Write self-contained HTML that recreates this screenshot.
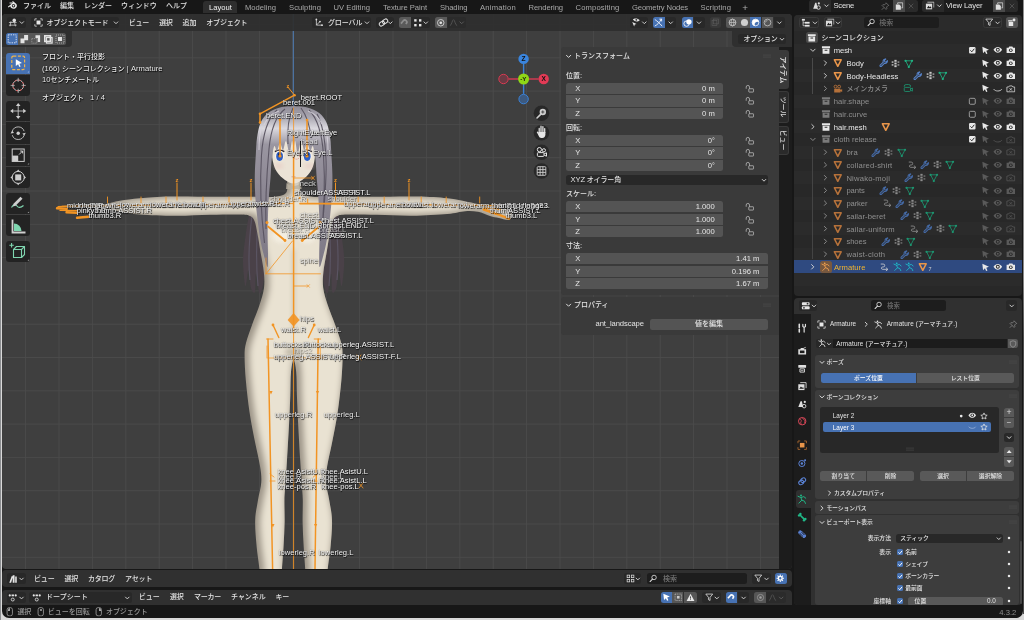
<!DOCTYPE html>
<html lang="ja"><head><meta charset="utf-8"><title>Blender</title>
<style>
html,body{margin:0;padding:0;}
body{width:1024px;height:620px;overflow:hidden;background:#d9d9d9;position:relative;font-family:"Liberation Sans","Noto Sans CJK JP",sans-serif;}
#win{will-change:transform;opacity:0.9999;position:absolute;left:0;top:0;width:1024px;height:620px;overflow:hidden;}
.r{position:absolute;box-sizing:border-box;}
.t{position:absolute;white-space:nowrap;font-size:7px;font-weight:500;line-height:12px;height:12px;color:#e3e3e3;}
.t .l{font-size:1.09em;}
.i{position:absolute;overflow:visible;}
.sh{text-shadow:0 0 1px #000,0.5px 0.5px 1px #000;}
.bl{color:#fff;font-size:7.6px;font-weight:400;text-shadow:0.5px 0.5px 0.8px rgba(0,0,0,.9),0 0 1px rgba(0,0,0,.8);}

</style></head>
<body>
<svg width="0" height="0" style="position:absolute">
<defs>
<symbol id="logo" viewBox="0 0 16 16"><path d="M1.2 10.2 7.6 5.3H3.9V3.9h5.5L7.9 2.7 8.9 1.6l5 4.1c1.3 1.2 1.5 3 .9 4.4-.8 1.9-2.7 3.1-4.9 3.1-2.4 0-4.5-1.5-5.0-3.6l-2.4 1.9z" fill="currentColor"/><circle cx="9.9" cy="8.7" r="2.6" fill="#181818"/><circle cx="9.9" cy="8.7" r="1.3" fill="currentColor"/></symbol>
<symbol id="coll" viewBox="0 0 16 16"><path d="M1.5 2h13v3.2h-13z M2.5 6h11v8h-11z" fill="currentColor"/><rect x="5.8" y="7.6" width="4.4" height="1.6" fill="#282828"/></symbol>
<symbol id="mesh" viewBox="0 0 16 16"><path d="M2.4 3h11.2L8 13.8z" fill="none" stroke="currentColor" stroke-width="2.6" stroke-linejoin="round"/></symbol>
<symbol id="wrench" viewBox="0 0 16 16"><path d="M10.8 1.6a4 4 0 0 0-3.3 5.6L2 12.6a1.5 1.5 0 0 0 2.1 2.1l5.3-5.5a4 4 0 0 0 5.2-4.6l-2.4 2.4-2.2-.6-.6-2.2 2.4-2.4a4 4 0 0 0-1-.2z" fill="none" stroke="currentColor" stroke-width="1.9" stroke-linejoin="round"/></symbol>
<symbol id="parts" viewBox="0 0 16 16"><g fill="currentColor"><rect x="6" y="1.5" width="4" height="3.4"/><rect x="6" y="6.3" width="4" height="3.4"/><rect x="6" y="11.1" width="4" height="3.4"/><rect x="1.2" y="4" width="3.2" height="3" opacity=".8"/><rect x="1.2" y="9" width="3.2" height="3" opacity=".8"/><rect x="11.6" y="4" width="3.2" height="3" opacity=".6"/><rect x="11.6" y="9" width="3.2" height="3" opacity=".6"/></g></symbol>
<symbol id="mdata" viewBox="0 0 16 16"><path d="M2.6 3h10.8L8 13.4z" fill="none" stroke="currentColor" stroke-width="1.4"/><circle cx="2.6" cy="3" r="1.9" fill="currentColor"/><circle cx="13.4" cy="3" r="1.9" fill="currentColor"/><circle cx="8" cy="13.4" r="1.9" fill="currentColor"/></symbol>
<symbol id="camob" viewBox="0 0 16 16"><circle cx="4.2" cy="4.4" r="2.4" fill="none" stroke="currentColor" stroke-width="1.5"/><circle cx="10.2" cy="4.4" r="2.4" fill="none" stroke="currentColor" stroke-width="1.5"/><path d="M2 8h10.5v2l3-1.5v5l-3-1.5v2H2z" fill="currentColor"/></symbol>
<symbol id="camdata" viewBox="0 0 16 16"><path d="M2 6a3 3 0 0 1 3-3.5h4a3 3 0 0 1 3 3.5" fill="none" stroke="currentColor" stroke-width="1.4"/><rect x="2" y="7" width="10" height="6.5" rx="1.5" fill="none" stroke="currentColor" stroke-width="1.4"/><path d="M12 9.5l3-1.5v5l-3-1.5" fill="none" stroke="currentColor" stroke-width="1.4"/></symbol>
<symbol id="arrow" viewBox="0 0 16 16"><path d="M2.5 1.5 14.8 6.8 9.8 8.7 12 13.8 9.5 14.8 7.3 9.7 3.8 13.4z" fill="currentColor"/></symbol>
<symbol id="eye" viewBox="0 0 16 16"><path d="M.8 8C3 4.6 5.4 3.2 8 3.2S13 4.6 15.2 8C13 11.4 10.6 12.8 8 12.8S3 11.4.8 8z" fill="currentColor"/><circle cx="8" cy="8" r="3.3" fill="#282828"/><circle cx="8" cy="8" r="1.7" fill="currentColor"/></symbol>
<symbol id="eyeoff" viewBox="0 0 16 16"><path d="M1.5 7.5C4 11 12 11 14.5 7.5" fill="none" stroke="currentColor" stroke-width="1.3" stroke-linecap="round"/></symbol>
<symbol id="cam" viewBox="0 0 16 16"><path d="M1 4.5h3.2l1.2-1.8h5.2l1.2 1.8H15V13.5H1z" fill="currentColor"/><circle cx="8" cy="8.8" r="3" fill="#282828"/><circle cx="8" cy="8.8" r="1.6" fill="currentColor"/></symbol>
<symbol id="camoff" viewBox="0 0 16 16"><path d="M1.5 5h3l1.2-1.8h4.6L11.5 5h3V13h-13z" fill="none" stroke="currentColor" stroke-width="1.2"/><path d="M6 7l4 4m0-4-4 4" stroke="currentColor" stroke-width="1.2"/></symbol>
<symbol id="chk" viewBox="0 0 16 16"><rect x="2" y="2" width="12" height="12" rx="2" fill="currentColor"/><path d="M4.5 8.2l2.6 2.6 4.6-5.6" fill="none" stroke="#222" stroke-width="1.8"/></symbol>
<symbol id="unchk" viewBox="0 0 16 16"><rect x="2.5" y="2.5" width="11" height="11" rx="2" fill="none" stroke="currentColor" stroke-width="1.4"/></symbol>
<symbol id="lock" viewBox="0 0 16 16"><path d="M2 8V5.2a2.8 2.8 0 0 1 5.6 0V8" fill="none" stroke="currentColor" stroke-width="1.2"/><rect x="6.4" y="8" width="8" height="5.6" rx=".8" fill="none" stroke="currentColor" stroke-width="1.2"/></symbol>
<symbol id="arm" viewBox="0 0 16 16"><circle cx="6.2" cy="2.2" r="1.5" fill="currentColor"/><path d="M1.5 3.5l4.5 2 4.5-1.5 3 2.5M6 5.5l1.5 4-4.5 4.5M7.5 9.5l4 1.5 1.5 3.5" fill="none" stroke="currentColor" stroke-width="1.5" stroke-linecap="round" stroke-linejoin="round"/></symbol>
<symbol id="con" viewBox="0 0 16 16"><path d="M2 3.5h3.5a2.5 2.5 0 0 1 0 5h-1a2 2 0 0 0 0 4H12" fill="none" stroke="currentColor" stroke-width="1.3" stroke-linecap="round"/><path d="M10.5 10l3 2.5-3 2.5" fill="none" stroke="currentColor" stroke-width="1.3" stroke-linecap="round" stroke-linejoin="round"/></symbol>
<symbol id="search" viewBox="0 0 16 16"><circle cx="9.5" cy="6.5" r="4.2" fill="none" stroke="currentColor" stroke-width="1.6"/><path d="M6.5 9.7 2 14.2" stroke="currentColor" stroke-width="2" stroke-linecap="round"/></symbol>
<symbol id="filter" viewBox="0 0 16 16"><path d="M1.5 2h13L9.5 8.2V14l-3-1.5V8.2z" fill="none" stroke="currentColor" stroke-width="1.5" stroke-linejoin="round"/></symbol>
<symbol id="pin" viewBox="0 0 16 16"><path d="M9.5 1.5 14.5 6.5l-1.5.5-2.5 2.5.5 3L9.5 14 2 6.5l1.5-1.5 3 .5 2.5-2.5z M5.5 10.5 1.5 14.5" fill="none" stroke="currentColor" stroke-width="1.2" stroke-linejoin="round"/></symbol>
<symbol id="copy" viewBox="0 0 16 16"><path d="M5 4V1.5h9.5V11H12" fill="none" stroke="currentColor" stroke-width="1.4"/><path d="M1.5 4.5h6.5l3 3V14.5h-9.5z" fill="currentColor"/></symbol>
<symbol id="xx" viewBox="0 0 16 16"><path d="M4 4l8 8m0-8-8 8" stroke="currentColor" stroke-width="1.5" stroke-linecap="round"/></symbol>
<symbol id="star" viewBox="0 0 16 16"><path d="M8 1.8 9.9 6l4.5.5-3.4 3 1 4.5L8 11.7 4 14l1-4.5-3.4-3L6.1 6z" fill="none" stroke="currentColor" stroke-width="1.5" stroke-linejoin="round"/></symbol>
<symbol id="shield" viewBox="0 0 16 16"><path d="M8 1.5 13.5 3.5v4.5c0 3-2.5 5.5-5.5 6.5-3-1-5.5-3.5-5.5-6.5v-4.5z" fill="none" stroke="currentColor" stroke-width="1.5"/></symbol>
<symbol id="mouse" viewBox="0 0 16 16"><rect x="3.5" y="1" width="9" height="14" rx="3.5" fill="none" stroke="currentColor" stroke-width="1.3"/></symbol>
<symbol id="scene" viewBox="0 0 16 16"><path d="M2 13 5.5 3h2l2 10z" fill="currentColor"/><circle cx="11.5" cy="4" r="1.8" fill="currentColor"/><circle cx="11" cy="11" r="3" fill="none" stroke="currentColor" stroke-width="1.5"/></symbol>
<symbol id="vlayer" viewBox="0 0 16 16"><path d="M4 2h11v9" fill="none" stroke="currentColor" stroke-width="1.3"/><rect x="1.5" y="4.5" width="10.5" height="9.5" fill="currentColor"/><path d="M3 12l3-4 2 2.5 1.5-1.5 1.5 3z" fill="#1d1d1d"/></symbol>
<symbol id="outl" viewBox="0 0 16 16"><rect x="1.5" y="1.5" width="5" height="3" fill="currentColor"/><rect x="6.5" y="6.5" width="8" height="3" fill="currentColor"/><rect x="6.5" y="11.5" width="8" height="3" fill="currentColor"/><path d="M3.5 4.5V13h3M3.5 8h3" fill="none" stroke="currentColor" stroke-width="1.2"/></symbol>
<symbol id="newcol" viewBox="0 0 16 16"><path d="M2 4h8v2H2z M3 7h8v7H3z" fill="currentColor"/><circle cx="12.5" cy="3.5" r="2.5" fill="currentColor"/></symbol>
<symbol id="props" viewBox="0 0 16 16"><rect x="1.5" y="2" width="13" height="5" rx="1.5" fill="currentColor"/><rect x="1.5" y="9" width="13" height="5" rx="1.5" fill="currentColor"/><circle cx="11" cy="4.5" r="1.5" fill="#303030"/><circle cx="5" cy="11.5" r="1.5" fill="#303030"/></symbol>
<symbol id="v3d" viewBox="0 0 16 16"><circle cx="10.5" cy="4" r="3" fill="currentColor"/><path d="M1.5 7.5h13M1.5 12h13M5 5.5 3.5 14M11 7.5l1.5 6.5" stroke="currentColor" stroke-width="1.2" fill="none"/></symbol>
<symbol id="objmode" viewBox="0 0 16 16"><rect x="4.5" y="4.5" width="7" height="7" fill="currentColor"/><path d="M1.5 5V1.5H5M11 1.5h3.5V5M14.5 11v3.5H11M5 14.5H1.5V11" fill="none" stroke="currentColor" stroke-width="1.3"/></symbol>
<symbol id="orient" viewBox="0 0 16 16"><path d="M4 2v10h10" fill="none" stroke="currentColor" stroke-width="1.3"/><path d="M4 12l6-6" stroke="currentColor" stroke-width="1.3"/><circle cx="4" cy="2.5" r="1.5" fill="currentColor"/><circle cx="13.5" cy="12" r="1.5" fill="currentColor"/><circle cx="10" cy="6" r="1.5" fill="currentColor"/></symbol>
<symbol id="pivot" viewBox="0 0 16 16"><g fill="none" stroke="currentColor" stroke-width="1.5" transform="rotate(-35 8 8)"><rect x="1.2" y="5.2" width="8" height="5.6" rx="2.8"/><rect x="6.8" y="5.2" width="8" height="5.6" rx="2.8"/></g></symbol>
<symbol id="magnet" viewBox="0 0 16 16"><path d="M3 13.5V7a5 5 0 0 1 10 0v1.5h-3V7a2 2 0 0 0-4 0v6.5z" fill="currentColor"/></symbol>
<symbol id="dots4" viewBox="0 0 16 16"><g fill="currentColor"><rect x="2" y="2" width="4" height="4"/><rect x="10" y="2" width="4" height="4"/><rect x="2" y="10" width="4" height="4"/><rect x="10" y="10" width="4" height="4"/></g></symbol>
<symbol id="prop" viewBox="0 0 16 16"><circle cx="8" cy="8" r="5.5" fill="none" stroke="currentColor" stroke-width="1.3"/><circle cx="8" cy="8" r="2.2" fill="currentColor"/></symbol>
<symbol id="falloff" viewBox="0 0 16 16"><path d="M1.5 13.5C5 13.5 5.5 3 8 3s3 10.5 6.5 10.5" fill="none" stroke="currentColor" stroke-width="1.3"/></symbol>
<symbol id="vis" viewBox="0 0 16 16"><path d="M3 4C5 1.8 11 1.8 14 5 11 8 6 8 3 4z" fill="currentColor"/><circle cx="8.5" cy="4.5" r="1.5" fill="#303030"/><path d="M2 8l7 3-3 .8L5 15z" fill="currentColor"/></symbol>
<symbol id="gizmo" viewBox="0 0 16 16"><path d="M2 14C6 12 10 8 13 2M2 3c3 2 8 6 12 11" fill="none" stroke="currentColor" stroke-width="1.5" stroke-linecap="round"/><path d="M9.5 2h4v4" fill="none" stroke="currentColor" stroke-width="1.5"/></symbol>
<symbol id="overlay" viewBox="0 0 16 16"><circle cx="6" cy="9.5" r="4.5" fill="none" stroke="currentColor" stroke-width="1.4"/><circle cx="10" cy="6.5" r="4.5" fill="currentColor"/></symbol>
<symbol id="xray" viewBox="0 0 16 16"><rect x="2" y="5" width="9" height="9" fill="none" stroke="currentColor" stroke-width="1.2"/><rect x="5" y="2" width="9" height="9" fill="none" stroke="currentColor" stroke-width="1.2"/></symbol>
<symbol id="shwire" viewBox="0 0 16 16"><circle cx="8" cy="8" r="6" fill="none" stroke="currentColor" stroke-width="1.3"/><ellipse cx="8" cy="8" rx="2.5" ry="6" fill="none" stroke="currentColor" stroke-width="1"/><path d="M2 8h12" stroke="currentColor" stroke-width="1"/></symbol>
<symbol id="shsolid" viewBox="0 0 16 16"><circle cx="8" cy="8" r="6.3" fill="currentColor"/></symbol>
<symbol id="shmat" viewBox="0 0 16 16"><circle cx="8" cy="8" r="6" fill="none" stroke="currentColor" stroke-width="1.3"/><path d="M8 2a6 6 0 0 0 0 12c-2-2-2-4 0-6s4-2 6 0a6 6 0 0 0-6-6z" fill="currentColor"/></symbol>
<symbol id="shrend" viewBox="0 0 16 16"><circle cx="8" cy="8" r="6" fill="none" stroke="currentColor" stroke-width="1.6"/><path d="M4.5 8a3.5 3.5 0 0 1 3.5-3.5" fill="none" stroke="currentColor" stroke-width="1.3"/></symbol>
<symbol id="asset" viewBox="0 0 16 16"><path d="M2 14 6 3l2 .8L5 14z M7.5 2h3v12h-3z M11.5 4h2.5v10h-2.5z" fill="currentColor"/></symbol>
<symbol id="dope" viewBox="0 0 16 16"><circle cx="3" cy="4" r="1.8" fill="currentColor"/><rect x="6" y="2.5" width="4" height="3" fill="currentColor"/><circle cx="13" cy="4" r="1.8" fill="currentColor"/><circle cx="8" cy="11" r="2.5" fill="none" stroke="currentColor" stroke-width="1.4"/></symbol>
<symbol id="grid4" viewBox="0 0 16 16"><g fill="none" stroke="currentColor" stroke-width="1.3"><rect x="2" y="2" width="4.5" height="4.5"/><rect x="9.5" y="2" width="4.5" height="4.5"/><rect x="2" y="9.5" width="4.5" height="4.5"/><rect x="9.5" y="9.5" width="4.5" height="4.5"/></g></symbol>
<symbol id="gear" viewBox="0 0 16 16"><circle cx="8" cy="8" r="3.5" fill="none" stroke="currentColor" stroke-width="2.5"/><path d="M8 1v3M8 12v3M1 8h3M12 8h3M3 3l2.2 2.2M10.8 10.8 13 13M13 3l-2.2 2.2M5.2 10.8 3 13" stroke="currentColor" stroke-width="2"/></symbol>
<symbol id="warn" viewBox="0 0 16 16"><path d="M8 1.5 15 14H1z" fill="currentColor"/><path d="M8 6v4M8 11.2v1.3" stroke="#444" stroke-width="1.6"/></symbol>
<symbol id="selbox" viewBox="0 0 16 16"><rect x="2" y="2" width="12" height="12" fill="none" stroke="currentColor" stroke-width="1.2" stroke-dasharray="2 1.3"/><rect x="5.5" y="5.5" width="5" height="5" fill="currentColor"/></symbol>
</defs>
</svg>

<div id="win">
<div class="r " style="left:1.50px;top:0.00px;width:1021.00px;height:618.30px;background:#171717;border-radius:0 0 7px 7px;"></div>
<div class="r " style="left:0.00px;top:0.00px;width:1.40px;height:620.00px;background:#8b8d90;"></div>
<div class="r " style="left:1022.60px;top:0.00px;width:1.40px;height:614.00px;background:linear-gradient(#909090,#8a8a8a 45%,#4e4e4e 55%,#4a4a4a);"></div>
<svg class="i" style="left:6.65px;top:0.15px;width:10.50px;height:10.50px;color:#e6e6e6;"><use href="#logo"/></svg>
<div id="t1" class="t " style="top:-0.30px;left:23.00px;letter-spacing:0.000px;">ファイル</div>
<div id="t2" class="t " style="top:-0.30px;left:60.00px;letter-spacing:0.000px;">編集</div>
<div id="t3" class="t " style="top:-0.30px;left:84.00px;letter-spacing:0.000px;">レンダー</div>
<div id="t4" class="t " style="top:-0.30px;left:121.00px;letter-spacing:0.200px;">ウィンドウ</div>
<div id="t5" class="t " style="top:-0.30px;left:166.00px;letter-spacing:0.000px;">ヘルプ</div>
<div class="r " style="left:202.80px;top:1.30px;width:34.20px;height:12.00px;background:#2e2e2e;border-radius:3px 3px 0 0;"></div>
<div id="t6" class="t " style="top:2.10px;left:209.00px;color:#f0f0f0;letter-spacing:0.016px;"><span class="l">Layout</span></div>
<div id="t7" class="t " style="top:2.10px;left:245.00px;color:#a8a8a8;letter-spacing:0.006px;"><span class="l">Modeling</span></div>
<div id="t8" class="t " style="top:2.10px;left:289.00px;color:#a8a8a8;letter-spacing:0.069px;"><span class="l">Sculpting</span></div>
<div id="t9" class="t " style="top:2.10px;left:333.50px;color:#a8a8a8;letter-spacing:0.047px;"><span class="l">UV Editing</span></div>
<div id="t10" class="t " style="top:2.10px;left:383.00px;color:#a8a8a8;letter-spacing:-0.040px;"><span class="l">Texture Paint</span></div>
<div id="t11" class="t " style="top:2.10px;left:440.00px;color:#a8a8a8;letter-spacing:-0.069px;"><span class="l">Shading</span></div>
<div id="t12" class="t " style="top:2.10px;left:480.00px;color:#a8a8a8;letter-spacing:0.231px;"><span class="l">Animation</span></div>
<div id="t13" class="t " style="top:2.10px;left:528.50px;color:#a8a8a8;letter-spacing:-0.076px;"><span class="l">Rendering</span></div>
<div id="t14" class="t " style="top:2.10px;left:575.50px;color:#a8a8a8;letter-spacing:0.146px;"><span class="l">Compositing</span></div>
<div id="t15" class="t " style="top:2.10px;left:632.00px;color:#a8a8a8;letter-spacing:-0.117px;"><span class="l">Geometry Nodes</span></div>
<div id="t16" class="t " style="top:2.10px;left:700.50px;color:#a8a8a8;letter-spacing:0.092px;"><span class="l">Scripting</span></div>
<div id="t17" class="t " style="top:1.60px;left:742.30px;color:#b0b0b0;font-size:9.00px;"><span class="l">+</span></div>
<div class="r " style="left:809.00px;top:0.40px;width:108.50px;height:11.30px;background:#2a2a2a;border-radius:2.5px;"></div>
<div class="r " style="left:831.00px;top:0.40px;width:61.50px;height:11.30px;background:#1d1d1d;"></div>
<div class="r " style="left:892.80px;top:0.40px;width:12.20px;height:11.30px;background:#4a4a4a;"></div>
<svg class="i" style="left:812.25px;top:1.15px;width:9.50px;height:9.50px;color:#dcdcdc;"><use href="#scene"/></svg>
<svg class="i" style="left:0;top:0;width:1024px;height:620px"><path d="M824.70 4.90 l1.80 1.80 l1.80 -1.80" fill="none" stroke="#ccc" stroke-width="1.0" stroke-linecap="round" stroke-linejoin="round"/></svg>
<div id="t18" class="t " style="top:-0.20px;left:833.50px;letter-spacing:-0.225px;"><span class="l">Scene</span></div>
<svg class="i" style="left:880.75px;top:1.65px;width:8.50px;height:8.50px;color:#8a8a8a;"><use href="#pin"/></svg>
<svg class="i" style="left:894.55px;top:1.65px;width:8.50px;height:8.50px;color:#e0e0e0;"><use href="#copy"/></svg>
<svg class="i" style="left:907.20px;top:1.90px;width:8.00px;height:8.00px;color:#5a5a5a;"><use href="#xx"/></svg>
<div class="r " style="left:922.00px;top:0.40px;width:96.00px;height:11.30px;background:#2a2a2a;border-radius:2.5px;"></div>
<div class="r " style="left:943.50px;top:0.40px;width:49.00px;height:11.30px;background:#1d1d1d;"></div>
<div class="r " style="left:992.80px;top:0.40px;width:12.40px;height:11.30px;background:#4a4a4a;"></div>
<svg class="i" style="left:925.25px;top:1.15px;width:9.50px;height:9.50px;color:#dcdcdc;"><use href="#vlayer"/></svg>
<svg class="i" style="left:0;top:0;width:1024px;height:620px"><path d="M937.50 4.90 l1.80 1.80 l1.80 -1.80" fill="none" stroke="#ccc" stroke-width="1.0" stroke-linecap="round" stroke-linejoin="round"/></svg>
<div id="t19" class="t " style="top:-0.20px;left:946.00px;letter-spacing:-0.109px;"><span class="l">View Layer</span></div>
<svg class="i" style="left:994.75px;top:1.65px;width:8.50px;height:8.50px;color:#e0e0e0;"><use href="#copy"/></svg>
<svg class="i" style="left:1007.50px;top:1.90px;width:8.00px;height:8.00px;color:#5a5a5a;"><use href="#xx"/></svg>
<div class="r" style="left:2px;top:14.4px;width:789.6px;height:554.4px;background:#3f3f3f;border-radius:4px;overflow:hidden">
<svg class="i" style="left:-2px;top:-14.4px;width:1024px;height:620px" viewBox="0 0 1024 620"><path d="M-7.8 0V620M25.6 0V620M59.0 0V620M92.4 0V620M125.8 0V620M159.2 0V620M192.6 0V620M226.0 0V620M259.4 0V620M292.8 0V620M326.2 0V620M359.6 0V620M393.0 0V620M426.4 0V620M459.8 0V620M493.2 0V620M526.6 0V620M560.0 0V620M593.4 0V620M626.8 0V620M660.2 0V620M693.6 0V620M727.0 0V620M760.4 0V620M793.8 0V620M0 -8.8H1024M0 24.5H1024M0 57.8H1024M0 91.1H1024M0 124.4H1024M0 157.7H1024M0 191.0H1024M0 224.3H1024M0 257.6H1024M0 290.9H1024M0 324.2H1024M0 357.5H1024M0 390.8H1024M0 424.1H1024M0 457.4H1024M0 490.7H1024M0 524.0H1024M0 557.3H1024M0 590.6H1024" stroke="#4c4c4c" stroke-width="0.9" fill="none"/><path d="M293.3 0V140" stroke="#4f7fb8" stroke-width="1"/></svg>
<svg class="i" style="left:-2px;top:-14.4px;width:1024px;height:620px" viewBox="0 0 1024 620"><defs>
<linearGradient id="gsk" x1="0" x2="1" y1="0" y2="0"><stop offset="0" stop-color="#b9b1a0"/><stop offset=".5" stop-color="#e9e2d4"/><stop offset="1" stop-color="#cfc7b6"/></linearGradient>
<filter id="fsoft" x="-5%" y="-5%" width="110%" height="110%"><feMorphology operator="erode" radius="2.2"/><feGaussianBlur stdDeviation="3.3"/></filter>
<filter id="fhl" x="-20%" y="-20%" width="140%" height="140%"><feGaussianBlur stdDeviation="2"/></filter>
<clipPath id="cbody"><path d="M288.0 178.0C286.1 179.7 288.0 185.3 287.5 188.0C287.0 190.7 287.1 192.5 285.0 194.0C282.9 195.5 279.5 196.3 275.0 196.8C270.5 197.3 268.0 196.8 258.0 196.8C248.0 196.8 229.7 196.8 215.0 196.8C200.3 196.8 182.5 196.3 170.0 196.6C157.5 196.8 148.3 197.6 140.0 198.3C131.7 199.0 125.8 199.8 120.0 200.8C114.2 201.8 109.2 203.4 105.0 204.3C100.8 205.2 95.0 205.5 95.0 206.2C95.0 206.9 100.8 207.7 105.0 208.6C109.2 209.5 114.2 210.5 120.0 211.5C125.8 212.5 130.8 213.8 140.0 214.5C149.2 215.2 163.3 215.8 175.0 215.8C186.7 215.9 199.2 215.0 210.0 214.8C220.8 214.6 233.3 214.3 240.0 214.5C246.7 214.7 247.6 214.9 250.0 216.0C252.4 217.1 253.2 218.0 254.5 221.0C255.8 224.0 256.5 228.8 257.5 234.0C258.5 239.2 259.4 245.7 260.5 252.0C261.6 258.3 263.2 266.0 263.8 272.0C264.4 278.0 264.7 282.5 264.0 288.0C263.3 293.5 261.5 298.8 259.5 305.0C257.5 311.2 254.2 318.7 252.0 325.0C249.8 331.3 247.2 337.8 246.0 343.0C244.8 348.2 244.6 349.8 244.6 356.0C244.6 362.2 245.0 370.7 245.8 380.0C246.6 389.3 248.0 401.7 249.5 412.0C251.0 422.3 253.2 433.0 255.0 442.0C256.8 451.0 258.9 459.3 260.0 466.0C261.1 472.7 261.6 476.3 261.3 482.0C261.0 487.7 259.0 493.7 258.0 500.0C257.0 506.3 255.4 512.5 255.2 520.0C254.9 527.5 255.8 536.8 256.5 545.0C257.2 553.2 258.9 563.2 259.5 569.0C260.1 574.8 256.2 578.2 260.0 580.0C263.8 581.8 278.3 581.8 282.0 580.0C285.7 578.2 281.7 574.8 282.0 569.0C282.3 563.2 283.2 552.8 283.6 545.0C284.0 537.2 284.5 529.5 284.6 522.0C284.7 514.5 284.3 506.3 284.4 500.0C284.5 493.7 285.0 490.7 285.4 484.0C285.8 477.3 286.4 469.8 287.0 460.0C287.6 450.2 288.4 435.8 289.0 425.0C289.6 414.2 290.0 403.8 290.3 395.0C290.6 386.2 290.4 377.9 291.0 372.0C291.6 366.1 292.7 359.5 293.6 359.5C294.5 359.5 295.7 366.1 296.2 372.0C296.8 377.9 296.6 386.2 296.9 395.0C297.2 403.8 297.7 414.2 298.2 425.0C298.8 435.8 299.6 450.2 300.2 460.0C300.8 469.8 301.4 477.3 301.8 484.0C302.2 490.7 302.7 493.7 302.8 500.0C302.9 506.3 302.5 514.5 302.6 522.0C302.7 529.5 303.2 537.2 303.6 545.0C304.0 552.8 304.9 563.2 305.2 569.0C305.5 574.8 301.5 578.2 305.2 580.0C308.9 581.8 323.5 581.8 327.2 580.0C331.0 578.2 327.1 574.8 327.7 569.0C328.3 563.2 330.0 553.2 330.7 545.0C331.4 536.8 332.3 527.5 332.0 520.0C331.8 512.5 330.2 506.3 329.2 500.0C328.2 493.7 326.2 487.7 325.9 482.0C325.6 476.3 326.2 472.7 327.2 466.0C328.3 459.3 330.5 451.0 332.2 442.0C334.0 433.0 336.2 422.3 337.7 412.0C339.2 401.7 340.6 389.3 341.4 380.0C342.2 370.7 342.6 362.2 342.6 356.0C342.6 349.8 342.4 348.2 341.2 343.0C340.0 337.8 337.5 331.3 335.2 325.0C333.0 318.7 329.7 311.2 327.7 305.0C325.7 298.8 323.9 293.5 323.2 288.0C322.5 282.5 322.8 278.0 323.4 272.0C324.0 266.0 325.7 258.3 326.7 252.0C327.8 245.7 328.7 239.2 329.7 234.0C330.7 228.8 331.5 224.0 332.7 221.0C334.0 218.0 334.8 217.1 337.2 216.0C339.6 214.9 340.5 214.7 347.2 214.5C353.9 214.3 366.4 214.6 377.2 214.8C388.0 215.0 400.5 215.8 412.2 215.7C423.9 215.6 438.4 214.8 447.2 214.0C456.0 213.2 459.9 211.6 465.0 211.2C470.1 210.8 473.8 211.0 478.0 211.8C482.2 212.6 486.5 215.0 490.0 216.0C493.5 217.0 495.8 217.4 499.0 218.0C502.2 218.6 506.8 220.5 509.0 219.8C511.2 219.1 513.0 215.8 512.5 214.0C512.0 212.2 508.9 210.3 506.0 209.0C503.1 207.7 499.7 207.0 495.0 206.2C490.3 205.4 482.5 204.7 478.0 204.0C473.5 203.3 473.1 202.9 468.0 202.0C462.9 201.1 455.7 199.2 447.2 198.3C438.7 197.4 429.7 196.8 417.2 196.6C404.7 196.3 386.9 196.8 372.2 196.8C357.5 196.8 339.2 196.8 329.2 196.8C319.2 196.8 316.7 197.3 312.2 196.8C307.7 196.3 304.3 195.5 302.2 194.0C300.1 192.5 300.2 190.7 299.7 188.0C299.2 185.3 301.2 179.7 299.2 178.0C297.3 176.3 289.9 176.3 288.0 178.0z"/></clipPath>
<linearGradient id="ghair" x1="0" x2="0" y1="0" y2="1"><stop offset="0" stop-color="#8f8b96"/><stop offset=".07" stop-color="#a9a6b0"/><stop offset=".14" stop-color="#dbd9df"/><stop offset=".24" stop-color="#9a96a1"/><stop offset=".5" stop-color="#8d8894"/><stop offset="1" stop-color="#7d7885"/></linearGradient>
</defs><path d="M262.0 150.0C259.5 155.0 257.2 179.2 255.0 190.0C252.8 200.8 250.7 206.7 249.0 215.0C247.3 223.3 246.0 232.2 245.0 240.0C244.0 247.8 242.9 254.3 243.0 262.0C243.1 269.7 244.6 284.7 245.5 286.0C246.4 287.3 247.6 269.7 248.5 270.0C249.4 270.3 249.9 284.3 251.0 288.0C252.1 291.7 254.2 294.3 255.0 292.0C255.8 289.7 255.2 273.8 256.0 274.0C256.8 274.2 258.3 291.2 259.5 293.0C260.7 294.8 261.9 290.2 263.0 285.0C264.1 279.8 265.2 271.2 266.0 262.0C266.8 252.8 267.5 240.3 268.0 230.0C268.5 219.7 268.7 211.7 269.0 200.0C269.3 188.3 271.2 168.3 270.0 160.0C268.8 151.7 264.5 145.0 262.0 150.0z" fill="#4a4148"/><path d="M325.2 150.0C327.7 155.0 330.0 179.2 332.2 190.0C334.4 200.8 336.5 206.7 338.2 215.0C339.9 223.3 341.2 232.2 342.2 240.0C343.2 247.8 344.3 254.3 344.2 262.0C344.1 269.7 342.6 284.7 341.7 286.0C340.8 287.3 339.6 269.7 338.7 270.0C337.8 270.3 337.3 284.3 336.2 288.0C335.1 291.7 333.0 294.3 332.2 292.0C331.4 289.7 332.0 273.8 331.2 274.0C330.5 274.2 328.9 291.2 327.7 293.0C326.5 294.8 325.3 290.2 324.2 285.0C323.1 279.8 322.0 271.2 321.2 262.0C320.4 252.8 319.7 240.3 319.2 230.0C318.7 219.7 318.5 211.7 318.2 200.0C317.9 188.3 316.0 168.3 317.2 160.0C318.4 151.7 322.7 145.0 325.2 150.0z" fill="#4a4148"/><path d="M252 215C249 240 248 262 250 280M258 220c-2 25-2 45 0 66" stroke="#5a5462" stroke-width="1.2" fill="none"/><path d="M335 215C338 240 339 262 337 280M329 220c2 25 2 45 0 66" stroke="#5a5462" stroke-width="1.2" fill="none"/><path d="M288.0 178.0C286.1 179.7 288.0 185.3 287.5 188.0C287.0 190.7 287.1 192.5 285.0 194.0C282.9 195.5 279.5 196.3 275.0 196.8C270.5 197.3 268.0 196.8 258.0 196.8C248.0 196.8 229.7 196.8 215.0 196.8C200.3 196.8 182.5 196.3 170.0 196.6C157.5 196.8 148.3 197.6 140.0 198.3C131.7 199.0 125.8 199.8 120.0 200.8C114.2 201.8 109.2 203.4 105.0 204.3C100.8 205.2 95.0 205.5 95.0 206.2C95.0 206.9 100.8 207.7 105.0 208.6C109.2 209.5 114.2 210.5 120.0 211.5C125.8 212.5 130.8 213.8 140.0 214.5C149.2 215.2 163.3 215.8 175.0 215.8C186.7 215.9 199.2 215.0 210.0 214.8C220.8 214.6 233.3 214.3 240.0 214.5C246.7 214.7 247.6 214.9 250.0 216.0C252.4 217.1 253.2 218.0 254.5 221.0C255.8 224.0 256.5 228.8 257.5 234.0C258.5 239.2 259.4 245.7 260.5 252.0C261.6 258.3 263.2 266.0 263.8 272.0C264.4 278.0 264.7 282.5 264.0 288.0C263.3 293.5 261.5 298.8 259.5 305.0C257.5 311.2 254.2 318.7 252.0 325.0C249.8 331.3 247.2 337.8 246.0 343.0C244.8 348.2 244.6 349.8 244.6 356.0C244.6 362.2 245.0 370.7 245.8 380.0C246.6 389.3 248.0 401.7 249.5 412.0C251.0 422.3 253.2 433.0 255.0 442.0C256.8 451.0 258.9 459.3 260.0 466.0C261.1 472.7 261.6 476.3 261.3 482.0C261.0 487.7 259.0 493.7 258.0 500.0C257.0 506.3 255.4 512.5 255.2 520.0C254.9 527.5 255.8 536.8 256.5 545.0C257.2 553.2 258.9 563.2 259.5 569.0C260.1 574.8 256.2 578.2 260.0 580.0C263.8 581.8 278.3 581.8 282.0 580.0C285.7 578.2 281.7 574.8 282.0 569.0C282.3 563.2 283.2 552.8 283.6 545.0C284.0 537.2 284.5 529.5 284.6 522.0C284.7 514.5 284.3 506.3 284.4 500.0C284.5 493.7 285.0 490.7 285.4 484.0C285.8 477.3 286.4 469.8 287.0 460.0C287.6 450.2 288.4 435.8 289.0 425.0C289.6 414.2 290.0 403.8 290.3 395.0C290.6 386.2 290.4 377.9 291.0 372.0C291.6 366.1 292.7 359.5 293.6 359.5C294.5 359.5 295.7 366.1 296.2 372.0C296.8 377.9 296.6 386.2 296.9 395.0C297.2 403.8 297.7 414.2 298.2 425.0C298.8 435.8 299.6 450.2 300.2 460.0C300.8 469.8 301.4 477.3 301.8 484.0C302.2 490.7 302.7 493.7 302.8 500.0C302.9 506.3 302.5 514.5 302.6 522.0C302.7 529.5 303.2 537.2 303.6 545.0C304.0 552.8 304.9 563.2 305.2 569.0C305.5 574.8 301.5 578.2 305.2 580.0C308.9 581.8 323.5 581.8 327.2 580.0C331.0 578.2 327.1 574.8 327.7 569.0C328.3 563.2 330.0 553.2 330.7 545.0C331.4 536.8 332.3 527.5 332.0 520.0C331.8 512.5 330.2 506.3 329.2 500.0C328.2 493.7 326.2 487.7 325.9 482.0C325.6 476.3 326.2 472.7 327.2 466.0C328.3 459.3 330.5 451.0 332.2 442.0C334.0 433.0 336.2 422.3 337.7 412.0C339.2 401.7 340.6 389.3 341.4 380.0C342.2 370.7 342.6 362.2 342.6 356.0C342.6 349.8 342.4 348.2 341.2 343.0C340.0 337.8 337.5 331.3 335.2 325.0C333.0 318.7 329.7 311.2 327.7 305.0C325.7 298.8 323.9 293.5 323.2 288.0C322.5 282.5 322.8 278.0 323.4 272.0C324.0 266.0 325.7 258.3 326.7 252.0C327.8 245.7 328.7 239.2 329.7 234.0C330.7 228.8 331.5 224.0 332.7 221.0C334.0 218.0 334.8 217.1 337.2 216.0C339.6 214.9 340.5 214.7 347.2 214.5C353.9 214.3 366.4 214.6 377.2 214.8C388.0 215.0 400.5 215.8 412.2 215.7C423.9 215.6 438.4 214.8 447.2 214.0C456.0 213.2 459.9 211.6 465.0 211.2C470.1 210.8 473.8 211.0 478.0 211.8C482.2 212.6 486.5 215.0 490.0 216.0C493.5 217.0 495.8 217.4 499.0 218.0C502.2 218.6 506.8 220.5 509.0 219.8C511.2 219.1 513.0 215.8 512.5 214.0C512.0 212.2 508.9 210.3 506.0 209.0C503.1 207.7 499.7 207.0 495.0 206.2C490.3 205.4 482.5 204.7 478.0 204.0C473.5 203.3 473.1 202.9 468.0 202.0C462.9 201.1 455.7 199.2 447.2 198.3C438.7 197.4 429.7 196.8 417.2 196.6C404.7 196.3 386.9 196.8 372.2 196.8C357.5 196.8 339.2 196.8 329.2 196.8C319.2 196.8 316.7 197.3 312.2 196.8C307.7 196.3 304.3 195.5 302.2 194.0C300.1 192.5 300.2 190.7 299.7 188.0C299.2 185.3 301.2 179.7 299.2 178.0C297.3 176.3 289.9 176.3 288.0 178.0z" fill="#9d9588"/><g clip-path="url(#cbody)"><path d="M288.0 178.0C286.1 179.7 288.0 185.3 287.5 188.0C287.0 190.7 287.1 192.5 285.0 194.0C282.9 195.5 279.5 196.3 275.0 196.8C270.5 197.3 268.0 196.8 258.0 196.8C248.0 196.8 229.7 196.8 215.0 196.8C200.3 196.8 182.5 196.3 170.0 196.6C157.5 196.8 148.3 197.6 140.0 198.3C131.7 199.0 125.8 199.8 120.0 200.8C114.2 201.8 109.2 203.4 105.0 204.3C100.8 205.2 95.0 205.5 95.0 206.2C95.0 206.9 100.8 207.7 105.0 208.6C109.2 209.5 114.2 210.5 120.0 211.5C125.8 212.5 130.8 213.8 140.0 214.5C149.2 215.2 163.3 215.8 175.0 215.8C186.7 215.9 199.2 215.0 210.0 214.8C220.8 214.6 233.3 214.3 240.0 214.5C246.7 214.7 247.6 214.9 250.0 216.0C252.4 217.1 253.2 218.0 254.5 221.0C255.8 224.0 256.5 228.8 257.5 234.0C258.5 239.2 259.4 245.7 260.5 252.0C261.6 258.3 263.2 266.0 263.8 272.0C264.4 278.0 264.7 282.5 264.0 288.0C263.3 293.5 261.5 298.8 259.5 305.0C257.5 311.2 254.2 318.7 252.0 325.0C249.8 331.3 247.2 337.8 246.0 343.0C244.8 348.2 244.6 349.8 244.6 356.0C244.6 362.2 245.0 370.7 245.8 380.0C246.6 389.3 248.0 401.7 249.5 412.0C251.0 422.3 253.2 433.0 255.0 442.0C256.8 451.0 258.9 459.3 260.0 466.0C261.1 472.7 261.6 476.3 261.3 482.0C261.0 487.7 259.0 493.7 258.0 500.0C257.0 506.3 255.4 512.5 255.2 520.0C254.9 527.5 255.8 536.8 256.5 545.0C257.2 553.2 258.9 563.2 259.5 569.0C260.1 574.8 256.2 578.2 260.0 580.0C263.8 581.8 278.3 581.8 282.0 580.0C285.7 578.2 281.7 574.8 282.0 569.0C282.3 563.2 283.2 552.8 283.6 545.0C284.0 537.2 284.5 529.5 284.6 522.0C284.7 514.5 284.3 506.3 284.4 500.0C284.5 493.7 285.0 490.7 285.4 484.0C285.8 477.3 286.4 469.8 287.0 460.0C287.6 450.2 288.4 435.8 289.0 425.0C289.6 414.2 290.0 403.8 290.3 395.0C290.6 386.2 290.4 377.9 291.0 372.0C291.6 366.1 292.7 359.5 293.6 359.5C294.5 359.5 295.7 366.1 296.2 372.0C296.8 377.9 296.6 386.2 296.9 395.0C297.2 403.8 297.7 414.2 298.2 425.0C298.8 435.8 299.6 450.2 300.2 460.0C300.8 469.8 301.4 477.3 301.8 484.0C302.2 490.7 302.7 493.7 302.8 500.0C302.9 506.3 302.5 514.5 302.6 522.0C302.7 529.5 303.2 537.2 303.6 545.0C304.0 552.8 304.9 563.2 305.2 569.0C305.5 574.8 301.5 578.2 305.2 580.0C308.9 581.8 323.5 581.8 327.2 580.0C331.0 578.2 327.1 574.8 327.7 569.0C328.3 563.2 330.0 553.2 330.7 545.0C331.4 536.8 332.3 527.5 332.0 520.0C331.8 512.5 330.2 506.3 329.2 500.0C328.2 493.7 326.2 487.7 325.9 482.0C325.6 476.3 326.2 472.7 327.2 466.0C328.3 459.3 330.5 451.0 332.2 442.0C334.0 433.0 336.2 422.3 337.7 412.0C339.2 401.7 340.6 389.3 341.4 380.0C342.2 370.7 342.6 362.2 342.6 356.0C342.6 349.8 342.4 348.2 341.2 343.0C340.0 337.8 337.5 331.3 335.2 325.0C333.0 318.7 329.7 311.2 327.7 305.0C325.7 298.8 323.9 293.5 323.2 288.0C322.5 282.5 322.8 278.0 323.4 272.0C324.0 266.0 325.7 258.3 326.7 252.0C327.8 245.7 328.7 239.2 329.7 234.0C330.7 228.8 331.5 224.0 332.7 221.0C334.0 218.0 334.8 217.1 337.2 216.0C339.6 214.9 340.5 214.7 347.2 214.5C353.9 214.3 366.4 214.6 377.2 214.8C388.0 215.0 400.5 215.8 412.2 215.7C423.9 215.6 438.4 214.8 447.2 214.0C456.0 213.2 459.9 211.6 465.0 211.2C470.1 210.8 473.8 211.0 478.0 211.8C482.2 212.6 486.5 215.0 490.0 216.0C493.5 217.0 495.8 217.4 499.0 218.0C502.2 218.6 506.8 220.5 509.0 219.8C511.2 219.1 513.0 215.8 512.5 214.0C512.0 212.2 508.9 210.3 506.0 209.0C503.1 207.7 499.7 207.0 495.0 206.2C490.3 205.4 482.5 204.7 478.0 204.0C473.5 203.3 473.1 202.9 468.0 202.0C462.9 201.1 455.7 199.2 447.2 198.3C438.7 197.4 429.7 196.8 417.2 196.6C404.7 196.3 386.9 196.8 372.2 196.8C357.5 196.8 339.2 196.8 329.2 196.8C319.2 196.8 316.7 197.3 312.2 196.8C307.7 196.3 304.3 195.5 302.2 194.0C300.1 192.5 300.2 190.7 299.7 188.0C299.2 185.3 301.2 179.7 299.2 178.0C297.3 176.3 289.9 176.3 288.0 178.0z" fill="#e9e2d2" filter="url(#fsoft)" transform="translate(2.8 0)"/></g><g clip-path="url(#cbody)" filter="url(#fhl)" opacity=".55"><ellipse cx="281" cy="236" rx="9" ry="7" fill="#fbf7ee"/><ellipse cx="307" cy="236" rx="9" ry="7" fill="#fbf7ee"/><path d="M293.6 250V330" stroke="#a79f8f" stroke-width="2"/><ellipse cx="293.6" cy="352" rx="9" ry="4" fill="#a39b8a"/></g><path d="M275.0 128.0C268.4 131.7 272.7 144.3 272.4 150.0C272.1 155.7 272.2 158.3 273.0 162.0C273.8 165.7 275.0 169.0 277.0 172.0C279.0 175.0 282.2 178.1 285.0 180.0C287.8 181.9 290.7 183.5 293.6 183.5C296.5 183.5 299.4 181.9 302.2 180.0C305.0 178.1 308.2 175.0 310.2 172.0C312.2 169.0 313.4 165.7 314.2 162.0C315.0 158.3 315.1 155.7 314.8 150.0C314.5 144.3 318.8 131.7 312.2 128.0C305.6 124.3 281.6 124.3 275.0 128.0z" fill="#ebe3d6"/><ellipse cx="279" cy="166" rx="4.5" ry="2.5" fill="#e6c3bd" opacity=".6" filter="url(#fhl)"/><ellipse cx="309" cy="166" rx="4.5" ry="2.5" fill="#e6c3bd" opacity=".6" filter="url(#fhl)"/><path d="M286.5 183c4 4 10 4 14.5 0l.5 6h-15.5z" fill="#b9b0a0" opacity=".8"/><ellipse cx="279.6" cy="156" rx="4.6" ry="5" fill="#f4f2f0"/><ellipse cx="279.6" cy="156.3" rx="3.4" ry="4.6" fill="#2f5fc4"/><ellipse cx="279.6" cy="155" rx="1.6" ry="2.2" fill="#15254f"/><path d="M274.9 151.6c2.6-2 6.6-2 9.4 0" stroke="#2a2530" stroke-width="1.4" fill="none"/><ellipse cx="307.2" cy="156" rx="4.6" ry="5" fill="#f4f2f0"/><ellipse cx="307.2" cy="156.3" rx="3.4" ry="4.6" fill="#2f5fc4"/><ellipse cx="307.2" cy="155" rx="1.6" ry="2.2" fill="#15254f"/><path d="M302.5 151.6c2.6-2 6.6-2 9.4 0" stroke="#2a2530" stroke-width="1.4" fill="none"/><path d="M291.5 176.8h4" stroke="#c99a94" stroke-width=".8"/><path d="M293.6 106.0C291.3 106.2 284.3 106.3 280.0 107.5C275.7 108.7 271.2 110.4 268.0 113.0C264.8 115.6 262.3 118.8 260.5 123.0C258.7 127.2 257.8 132.7 257.0 138.0C256.2 143.3 256.2 148.8 255.8 155.0C255.4 161.2 254.9 168.3 254.8 175.0C254.7 181.7 254.8 188.3 255.2 195.0C255.6 201.7 256.2 207.8 257.0 215.0C257.8 222.2 258.9 231.5 260.0 238.0C261.1 244.5 262.2 249.2 263.5 254.0C264.8 258.8 266.8 267.0 267.5 267.0C268.2 267.0 268.0 259.3 268.0 254.0C268.0 248.7 267.6 241.5 267.6 235.0C267.6 228.5 267.8 221.7 268.0 215.0C268.2 208.3 268.6 201.2 269.0 195.0C269.4 188.8 270.1 183.5 270.5 178.0C270.9 172.5 271.1 166.2 271.5 162.0C271.9 157.8 272.1 155.7 272.6 153.0C273.1 150.3 273.8 146.3 274.5 146.0C275.2 145.7 276.1 151.5 277.0 151.0C277.9 150.5 279.0 143.2 280.0 143.0C281.0 142.8 282.0 150.3 283.0 150.0C284.0 149.7 284.9 140.5 286.0 141.0C287.1 141.5 288.5 153.0 289.5 153.0C290.5 153.0 291.3 141.8 292.0 141.0C292.7 140.2 293.1 148.0 293.6 148.0C294.1 148.0 294.5 140.2 295.2 141.0C295.9 141.8 296.7 153.0 297.7 153.0C298.7 153.0 300.1 141.5 301.2 141.0C302.3 140.5 303.2 149.7 304.2 150.0C305.2 150.3 306.2 142.8 307.2 143.0C308.2 143.2 309.3 150.5 310.2 151.0C311.1 151.5 312.0 145.7 312.7 146.0C313.4 146.3 314.1 150.3 314.6 153.0C315.1 155.7 315.4 157.8 315.7 162.0C316.1 166.2 316.3 172.5 316.7 178.0C317.1 183.5 317.8 188.8 318.2 195.0C318.6 201.2 319.0 208.3 319.2 215.0C319.4 221.7 319.6 228.5 319.6 235.0C319.6 241.5 319.2 248.7 319.2 254.0C319.2 259.3 319.0 267.0 319.7 267.0C320.5 267.0 322.5 258.8 323.7 254.0C325.0 249.2 326.1 244.5 327.2 238.0C328.3 231.5 329.4 222.2 330.2 215.0C331.0 207.8 331.6 201.7 332.0 195.0C332.4 188.3 332.5 181.7 332.4 175.0C332.3 168.3 331.8 161.2 331.4 155.0C331.0 148.8 331.0 143.3 330.2 138.0C329.4 132.7 328.5 127.2 326.7 123.0C324.9 118.8 322.5 115.6 319.2 113.0C316.0 110.4 311.5 108.7 307.2 107.5C302.9 106.3 295.9 106.2 293.6 106.0C291.3 105.8 295.9 105.8 293.6 106.0z" fill="url(#ghair)"/><g fill="none" stroke="#55505d" stroke-width="1.1" opacity=".9"><path d="M285 109c-8 6-14 18-16 40s-4 50-3 80M277 110c-9 8-14 22-15.5 45s-1 55 3 88M293 108c-4 8-6 20-5 36M301 108c6 8 9 18 10 30M309 110c8 8 13 22 14.5 45s1 55-3 86M317 114c6 10 8 25 9 45s-2 48-4 72"/></g><g fill="none" stroke="#d7d3dc" stroke-width="1.1" opacity=".8"><path d="M264 125c3-7 8-12 15-14M322 124c-3-6-8-11-14-13M259 150c0-10 1-18 3-24M328 150c0-9-1-17-3-23"/></g></svg><svg class="i" style="left:-2px;top:-14.4px;width:1024px;height:620px" viewBox="0 0 1024 620"><path d="M260.0 113.8L294.5 95.2" stroke="#f29423" stroke-width="1.5" stroke-linecap="round" opacity="1"/><path d="M294.5 95.2L288.0 87.2" stroke="#f29423" stroke-width="1.0" stroke-linecap="round" opacity="1"/><path d="M260.0 113.8L260.0 122.5" stroke="#f29423" stroke-width="1.5" stroke-linecap="round" opacity="1"/><circle cx="260.0" cy="113.8" r="1.3" fill="#f29423"/><circle cx="260.0" cy="122.5" r="1.3" fill="#f29423"/><circle cx="294.5" cy="95.2" r="1.3" fill="#f29423"/><path d="M280.0 120.0L280.0 156.0" stroke="#f29423" stroke-width="1.5" stroke-linecap="round" opacity="1"/><circle cx="280.0" cy="120.0" r="1.3" fill="#f29423"/><circle cx="280.0" cy="156.0" r="1.6" fill="#f29423"/><path d="M307.0 120.0L307.0 156.0" stroke="#f29423" stroke-width="1.5" stroke-linecap="round" opacity="1"/><circle cx="307.0" cy="120.0" r="1.3" fill="#f29423"/><circle cx="307.0" cy="156.0" r="1.6" fill="#f29423"/><path d="M293.6 108.0L293.6 132.0" stroke="#f29423" stroke-width="0.8" stroke-linecap="round" opacity="1"/><path d="M293.6 132.0L293.6 330.0" stroke="#f29423" stroke-width="1.5" stroke-linecap="round" opacity="1"/><path d="M293.6 330.0L293.6 568.8" stroke="#f29423" stroke-width="0.9" stroke-linecap="round" opacity="1"/><path d="M293.6 178.0L313.0 178.0" stroke="#f29423" stroke-width="0.8" stroke-linecap="round" opacity="1"/><path d="M311.5 176.2L314.5 179.8" stroke="#f29423" stroke-width="0.7" stroke-linecap="round" opacity="1"/><path d="M314.5 176.2L311.5 179.8" stroke="#f29423" stroke-width="0.7" stroke-linecap="round" opacity="1"/><path d="M300.5 141v26" stroke="#1a1a1a" stroke-width="1"/><circle cx="296.5" cy="156" r="3.2" fill="none" stroke="#e05050" stroke-width=".6" stroke-dasharray="1 1"/><path d="M62.0 206.2L262.0 203.8" stroke="#f29423" stroke-width="1.1" stroke-linecap="round" opacity="1"/><path d="M325.0 203.8L500.0 205.6" stroke="#f29423" stroke-width="1.1" stroke-linecap="round" opacity="1"/><path d="M300.0 203.6L346.0 203.6" stroke="#f29423" stroke-width="1.7" stroke-linecap="round" opacity="1"/><path d="M262.0 203.6L293.6 203.6" stroke="#f29423" stroke-width="0.9" stroke-linecap="round" opacity="1"/><path d="M177.0 183.0L177.0 200.0" stroke="#f29423" stroke-width="1.0" stroke-linecap="round" opacity="1"/><path d="M251.0 183.0L251.0 200.0" stroke="#f29423" stroke-width="1.0" stroke-linecap="round" opacity="1"/><path d="M335.5 183.0L335.5 200.0" stroke="#f29423" stroke-width="1.0" stroke-linecap="round" opacity="1"/><path d="M409.0 183.0L409.0 200.0" stroke="#f29423" stroke-width="1.0" stroke-linecap="round" opacity="1"/><path d="M107.5 197.0L107.5 203.0" stroke="#f29423" stroke-width="0.9" stroke-linecap="round" opacity="1"/><path d="M479.7 197.0L479.7 203.0" stroke="#f29423" stroke-width="0.9" stroke-linecap="round" opacity="1"/><path d="M141.0 197.0L141.0 203.0" stroke="#f29423" stroke-width="0.9" stroke-linecap="round" opacity="1"/><path d="M446.2 197.0L446.2 203.0" stroke="#f29423" stroke-width="0.9" stroke-linecap="round" opacity="1"/><path d="M166.0 197.0L166.0 203.0" stroke="#f29423" stroke-width="0.9" stroke-linecap="round" opacity="1"/><path d="M421.2 197.0L421.2 203.0" stroke="#f29423" stroke-width="0.9" stroke-linecap="round" opacity="1"/><path d="M203.0 197.0L203.0 203.0" stroke="#f29423" stroke-width="0.9" stroke-linecap="round" opacity="1"/><path d="M384.2 197.0L384.2 203.0" stroke="#f29423" stroke-width="0.9" stroke-linecap="round" opacity="1"/><path d="M229.0 197.0L229.0 203.0" stroke="#f29423" stroke-width="0.9" stroke-linecap="round" opacity="1"/><path d="M358.2 197.0L358.2 203.0" stroke="#f29423" stroke-width="0.9" stroke-linecap="round" opacity="1"/><path d="M279.5 199.0L279.5 203.5" stroke="#f29423" stroke-width="1.0" stroke-linecap="round" opacity="1"/><path d="M307.7 199.0L307.7 203.5" stroke="#f29423" stroke-width="1.0" stroke-linecap="round" opacity="1"/><circle cx="287.5" cy="198.0" r="1.0" fill="#f29423"/><circle cx="299.7" cy="198.0" r="1.0" fill="#f29423"/><path d="M57.0 208.3L67.0 208.8" stroke="#f29423" stroke-width="2.4" stroke-linecap="round" opacity="1"/><path d="M66.5 212.3L77.0 212.8" stroke="#f29423" stroke-width="2.4" stroke-linecap="round" opacity="1"/><path d="M77.0 217.8L88.5 216.8" stroke="#f29423" stroke-width="2.4" stroke-linecap="round" opacity="1"/><path d="M58.0 206.6L70.0 206.2" stroke="#f29423" stroke-width="1.2" stroke-linecap="round" opacity="1"/><path d="M60.0 210.4L78.0 210.6" stroke="#f29423" stroke-width="1.2" stroke-linecap="round" opacity="1"/><path d="M483.8 209.6L497.0 214.0" stroke="#f29423" stroke-width="2.6" stroke-linecap="round" opacity="1"/><path d="M497.0 214.0L509.0 218.6" stroke="#f29423" stroke-width="2.4" stroke-linecap="round" opacity="1"/><path d="M484.0 207.6L500.0 209.6" stroke="#f29423" stroke-width="1.4" stroke-linecap="round" opacity="1"/><path d="M268.0 226.5L285.0 240.5" stroke="#f29423" stroke-width="1.8" stroke-linecap="round" opacity="1"/><path d="M319.2 226.5L302.2 240.5" stroke="#f29423" stroke-width="1.8" stroke-linecap="round" opacity="1"/><circle cx="267.0" cy="222.5" r="1.5" fill="#f29423"/><circle cx="320.2" cy="222.5" r="1.5" fill="#f29423"/><circle cx="285.0" cy="240.5" r="1.4" fill="#f29423"/><circle cx="302.2" cy="240.5" r="1.4" fill="#f29423"/><path d="M266.0 273.8L320.5 273.8" stroke="#f29423" stroke-width="0.8" stroke-linecap="round" opacity="1"/><path d="M266.0 273.8L292.5 241.0" stroke="#f29423" stroke-width="0.8" stroke-linecap="round" opacity="1"/><path d="M266.0 258.0L266.0 273.8" stroke="#f29423" stroke-width="0.7" stroke-linecap="round" opacity="1"/><path d="M293.6 286.0L308.0 286.0" stroke="#f29423" stroke-width="0.8" stroke-linecap="round" opacity="1"/><path d="M307.0 284.6L309.6 287.4" stroke="#f29423" stroke-width="0.6" stroke-linecap="round" opacity="1"/><path d="M309.6 284.6L307.0 287.4" stroke="#f29423" stroke-width="0.6" stroke-linecap="round" opacity="1"/><path d="M293.6 313l6 7-6 6.5-6-6.5z" fill="#f29423" opacity=".9"/><path d="M273.0 325.0L278.8 337.5" stroke="#f29423" stroke-width="1.4" stroke-linecap="round" opacity="1"/><path d="M314.2 325.0L308.4 337.5" stroke="#f29423" stroke-width="1.4" stroke-linecap="round" opacity="1"/><circle cx="273.0" cy="325.0" r="1.4" fill="#f29423"/><circle cx="314.2" cy="325.0" r="1.4" fill="#f29423"/><path d="M268.0 339.0L272.6 568.8" stroke="#f29423" stroke-width="1.5" stroke-linecap="round" opacity="1"/><path d="M318.2 339.0L315.0 568.8" stroke="#f29423" stroke-width="1.5" stroke-linecap="round" opacity="1"/><path d="M266.5 339.0L273.0 339.0" stroke="#f29423" stroke-width="0.9" stroke-linecap="round" opacity="1"/><path d="M320.7 339.0L314.2 339.0" stroke="#f29423" stroke-width="0.9" stroke-linecap="round" opacity="1"/><path d="M267.0 346.0L267.0 358.0" stroke="#f29423" stroke-width="0.8" stroke-linecap="round" opacity="1"/><path d="M320.2 346.0L320.2 358.0" stroke="#f29423" stroke-width="0.8" stroke-linecap="round" opacity="1"/><path d="M268.0 358.0L323.6 358.0" stroke="#f29423" stroke-width="0.7" stroke-linecap="round" opacity="1"/><path d="M269.4 391.0l1.6 3.4 1.6-3.4z" fill="#f29423"/><path d="M315.9 391.0l1.6 3.4 1.6-3.4z" fill="#f29423"/><path d="M271.3 524.0l1.6 3.4 1.6-3.4z" fill="#f29423"/><path d="M314.0 524.0l1.6 3.4 1.6-3.4z" fill="#f29423"/><path d="M270.0 474.0L274.0 477.0" stroke="#f29423" stroke-width="0.8" stroke-linecap="round" opacity="1"/><path d="M317.2 474.0L313.2 477.0" stroke="#f29423" stroke-width="0.8" stroke-linecap="round" opacity="1"/><path d="M270.0 481.0L275.0 481.0" stroke="#f29423" stroke-width="0.8" stroke-linecap="round" opacity="1"/><path d="M317.2 481.0L312.2 481.0" stroke="#f29423" stroke-width="0.8" stroke-linecap="round" opacity="1"/><path d="M357.0 355.0L361.0 360.0" stroke="#f29423" stroke-width="0.8" stroke-linecap="round" opacity="1"/><path d="M361.0 355.0L357.0 360.0" stroke="#f29423" stroke-width="0.8" stroke-linecap="round" opacity="1"/><path d="M359.0 483.0L363.0 488.0" stroke="#f29423" stroke-width="0.8" stroke-linecap="round" opacity="1"/><path d="M363.0 483.0L359.0 488.0" stroke="#f29423" stroke-width="0.8" stroke-linecap="round" opacity="1"/></svg>
<div class="t bl" style="left:298.8px;top:77.2px;">beret.ROOT</div>
<div class="t bl" style="left:281.0px;top:82.4px;">beret.001</div>
<div class="t bl" style="left:264.0px;top:96.0px;">beret.END</div>
<div class="t bl" style="left:284.9px;top:113.0px;">RightEye</div>
<div class="t bl" style="left:309.5px;top:113.0px;">LeftEye</div>
<div class="t bl" style="left:298.8px;top:121.3px;opacity:0.75;">head</div>
<div class="t bl" style="left:284.9px;top:132.3px;">Eye.R</div>
<div class="t bl" style="left:311.0px;top:132.3px;">Eye.L</div>
<div class="t bl" style="left:297.8px;top:163.6px;opacity:0.8;">neck</div>
<div class="t bl" style="left:292.0px;top:172.6px;">shoulderASSIST.R</div>
<div class="t bl" style="left:336.0px;top:172.6px;">ASSIST.L</div>
<div class="t bl" style="left:268.0px;top:178.2px;opacity:0.6;">shoulder.R</div>
<div class="t bl" style="left:325.5px;top:179.1px;opacity:0.6;">shoulder</div>
<div class="t" style="left:173.5px;top:160.1px;color:#f29423;font-size:6px;font-weight:bold">z</div>
<div class="t" style="left:247.5px;top:160.1px;color:#f29423;font-size:6px;font-weight:bold">z</div>
<div class="t" style="left:332.0px;top:160.1px;color:#f29423;font-size:6px;font-weight:bold">z</div>
<div class="t" style="left:405.5px;top:160.1px;color:#f29423;font-size:6px;font-weight:bold">z</div>
<div class="t" style="left:284.5px;top:65.6px;color:#f29423;font-size:5.5px;font-weight:bold">z</div>
<div class="t bl" style="left:65.0px;top:185.7px;">middle3.R</div>
<div class="t bl" style="left:77.0px;top:185.6px;">ring3.R</div>
<div class="t bl" style="left:90.0px;top:185.4px;">hand.R</div>
<div class="t bl" style="left:104.0px;top:185.3px;">wrist.R</div>
<div class="t bl" style="left:118.0px;top:185.1px;">lowerarm.twist3.R</div>
<div class="t bl" style="left:148.0px;top:184.8px;">lowerarm.twist.R</div>
<div class="t bl" style="left:176.0px;top:184.4px;">elbow.R</div>
<div class="t bl" style="left:194.0px;top:184.2px;">upperarm.twist3.R</div>
<div class="t bl" style="left:226.0px;top:183.9px;">upperarm.twist2.R</div>
<div class="t bl" style="left:250.0px;top:183.6px;">twist.R</div>
<div class="t bl" style="left:74.7px;top:190.4px;">pinky3.R</div>
<div class="t bl" style="left:93.0px;top:190.4px;">thumb.ASSIST.R</div>
<div class="t bl" style="left:86.4px;top:195.2px;">thumb3.R</div>
<div class="t bl" style="left:342.0px;top:184.0px;">upperarm.L</div>
<div class="t bl" style="left:366.0px;top:184.3px;">upperarm.twist.L</div>
<div class="t bl" style="left:394.0px;top:184.6px;">elbow.L</div>
<div class="t bl" style="left:412.0px;top:184.8px;">twist.L</div>
<div class="t bl" style="left:430.0px;top:185.0px;">lowerarm.L</div>
<div class="t bl" style="left:456.0px;top:185.3px;">lowerarm.twist3.L</div>
<div class="t bl" style="left:492.0px;top:185.7px;">hand.L</div>
<div class="t bl" style="left:506.0px;top:185.9px;">middle3.L</div>
<div class="t bl" style="left:520.0px;top:186.0px;">ringe3.L</div>
<div class="t bl" style="left:488.0px;top:190.4px;">thumb.L</div>
<div class="t bl" style="left:506.0px;top:190.4px;">ASSIST.L</div>
<div class="t bl" style="left:503.6px;top:196.0px;">thumb3.L</div>
<div class="t bl" style="left:529.0px;top:185.4px;">nge3</div>
<div class="t bl" style="left:298.0px;top:194.8px;opacity:0.75;">chest</div>
<div class="t bl" style="left:271.0px;top:200.2px;">chest.ASSIST.R</div>
<div class="t bl" style="left:319.2px;top:200.2px;">chest.ASSIST.L</div>
<div class="t bl" style="left:274.0px;top:205.9px;">breast.END.R</div>
<div class="t bl" style="left:320.5px;top:205.9px;">breast.END.L</div>
<div class="t bl" style="left:279.0px;top:210.1px;opacity:0.6;">breast.R</div>
<div class="t bl" style="left:316.8px;top:210.1px;opacity:0.6;">breast.L</div>
<div class="t bl" style="left:285.5px;top:215.4px;">breast.ASSIST.R</div>
<div class="t bl" style="left:328.0px;top:215.4px;">ASSIST.L</div>
<div class="t bl" style="left:298.0px;top:240.3px;opacity:0.8;">spine</div>
<div class="t bl" style="left:298.0px;top:298.3px;opacity:0.9;">hips</div>
<div class="t bl" style="left:279.0px;top:309.6px;opacity:0.9;">waist.R</div>
<div class="t bl" style="left:315.5px;top:309.6px;opacity:0.9;">waist.L</div>
<div class="t bl" style="left:271.8px;top:325.1px;">buttocks.R</div>
<div class="t bl" style="left:301.0px;top:325.1px;">buttocks.L</div>
<div class="t bl" style="left:328.0px;top:325.1px;">upperleg.ASSIST.L</div>
<div class="t bl" style="left:271.8px;top:336.6px;">upperleg.ASSIST-F.R</div>
<div class="t bl" style="left:328.0px;top:336.6px;">upperleg.ASSIST-F.L</div>
<div class="t bl" style="left:292.0px;top:330.9px;opacity:0.5;">hips2</div>
<div class="t bl" style="left:273.0px;top:394.2px;opacity:0.9;">upperleg.R</div>
<div class="t bl" style="left:321.8px;top:394.2px;opacity:0.9;">upperleg.L</div>
<div class="t bl" style="left:275.5px;top:451.4px;">knee.AsistU.R</div>
<div class="t bl" style="left:319.2px;top:451.4px;">knee.AsistU.L</div>
<div class="t bl" style="left:275.5px;top:456.6px;opacity:0.9;">knee.R</div>
<div class="t bl" style="left:319.2px;top:456.6px;opacity:0.9;">knee.L</div>
<div class="t bl" style="left:275.5px;top:461.0px;">knee.AsistL.R</div>
<div class="t bl" style="left:319.2px;top:461.0px;">knee.AsistL.L</div>
<div class="t bl" style="left:275.5px;top:466.4px;">knee-pos.R</div>
<div class="t bl" style="left:319.2px;top:466.4px;">knee-pos.L</div>
<div class="t bl" style="left:276.8px;top:532.6px;opacity:0.95;">lowerleg.R</div>
<div class="t bl" style="left:316.8px;top:532.6px;opacity:0.95;">lowerleg.L</div>
</div>
<div class="r " style="left:2.00px;top:14.40px;width:789.60px;height:16.40px;background:rgba(46,46,46,0.93);border-radius:4px 4px 0 0;"></div>
<div class="r " style="left:2.00px;top:30.80px;width:70.00px;height:16.00px;background:rgba(46,46,46,0.93);border-radius:0 0 4px 0;"></div>
<div class="r " style="left:7.00px;top:17.00px;width:18.80px;height:10.60px;background:#282828;border-radius:2.5px;"></div>
<svg class="i" style="left:8.25px;top:17.55px;width:9.50px;height:9.50px;color:#e0e0e0;"><use href="#v3d"/></svg>
<svg class="i" style="left:0;top:0;width:1024px;height:620px"><path d="M20.00 21.70 l1.80 1.80 l1.80 -1.80" fill="none" stroke="#ccc" stroke-width="1.0" stroke-linecap="round" stroke-linejoin="round"/></svg>
<div class="r " style="left:31.20px;top:17.00px;width:88.30px;height:10.60px;background:#282828;border-radius:2.5px;"></div>
<svg class="i" style="left:34.00px;top:17.80px;width:9.00px;height:9.00px;color:#e6e6e6;"><use href="#objmode"/></svg>
<div id="t20" class="t " style="top:16.50px;left:46.50px;letter-spacing:-0.111px;">オブジェクトモード</div>
<svg class="i" style="left:0;top:0;width:1024px;height:620px"><path d="M114.20 21.90 l1.80 1.80 l1.80 -1.80" fill="none" stroke="#ccc" stroke-width="1.0" stroke-linecap="round" stroke-linejoin="round"/></svg>
<div id="t21" class="t " style="top:16.50px;left:128.70px;letter-spacing:-0.167px;">ビュー</div>
<div id="t22" class="t " style="top:16.50px;left:159.20px;letter-spacing:-0.350px;">選択</div>
<div id="t23" class="t " style="top:16.50px;left:182.50px;letter-spacing:-0.100px;">追加</div>
<div id="t24" class="t " style="top:16.50px;left:206.20px;letter-spacing:-0.117px;">オブジェクト</div>
<div class="r " style="left:312.20px;top:17.00px;width:58.80px;height:10.60px;background:#282828;border-radius:2.5px;"></div>
<svg class="i" style="left:314.25px;top:17.55px;width:9.50px;height:9.50px;color:#dcdcdc;"><use href="#orient"/></svg>
<div id="t25" class="t " style="top:16.50px;left:328.00px;letter-spacing:-0.128px;">グローバル</div>
<svg class="i" style="left:0;top:0;width:1024px;height:620px"><path d="M365.20 21.90 l1.80 1.80 l1.80 -1.80" fill="none" stroke="#ccc" stroke-width="1.0" stroke-linecap="round" stroke-linejoin="round"/></svg>
<div class="r " style="left:376.00px;top:17.00px;width:18.20px;height:10.60px;background:#282828;border-radius:2.5px;"></div>
<svg class="i" style="left:377.70px;top:16.80px;width:11.00px;height:11.00px;color:#dcdcdc;"><use href="#pivot"/></svg>
<svg class="i" style="left:0;top:0;width:1024px;height:620px"><path d="M388.50 21.90 l1.80 1.80 l1.80 -1.80" fill="none" stroke="#ccc" stroke-width="1.0" stroke-linecap="round" stroke-linejoin="round"/></svg>
<div class="r " style="left:398.50px;top:17.00px;width:12.50px;height:10.60px;background:#5a5a5a;border-radius:2.5px 0 0 2.5px;"></div>
<svg class="i" style="left:400.30px;top:17.80px;width:9.00px;height:9.00px;color:#8d8d8d;transform:rotate(40deg);"><use href="#magnet"/></svg>
<div class="r " style="left:411.30px;top:17.00px;width:18.50px;height:10.60px;background:#282828;border-radius:0 2.5px 2.5px 0;"></div>
<svg class="i" style="left:412.80px;top:17.50px;width:9.60px;height:9.60px;color:#e6e6e6;"><use href="#dots4"/></svg>
<svg class="i" style="left:0;top:0;width:1024px;height:620px"><path d="M424.00 21.90 l1.80 1.80 l1.80 -1.80" fill="none" stroke="#ccc" stroke-width="1.0" stroke-linecap="round" stroke-linejoin="round"/></svg>
<div class="r " style="left:434.70px;top:17.00px;width:12.50px;height:10.60px;background:#5a5a5a;border-radius:2.5px 0 0 2.5px;"></div>
<svg class="i" style="left:436.25px;top:17.55px;width:9.50px;height:9.50px;color:#e6e6e6;"><use href="#prop"/></svg>
<div class="r " style="left:447.50px;top:17.00px;width:18.00px;height:10.60px;background:#2b2b2b;border-radius:0 2.5px 2.5px 0;"></div>
<svg class="i" style="left:449.00px;top:17.80px;width:9.00px;height:9.00px;color:#5f5f5f;"><use href="#falloff"/></svg>
<svg class="i" style="left:0;top:0;width:1024px;height:620px"><path d="M459.90 21.90 l1.80 1.80 l1.80 -1.80" fill="none" stroke="#5a5a5a" stroke-width="1.0" stroke-linecap="round" stroke-linejoin="round"/></svg>
<div class="r " style="left:629.50px;top:17.00px;width:18.70px;height:10.60px;background:#282828;border-radius:2.5px;"></div>
<svg class="i" style="left:631.00px;top:17.30px;width:10.00px;height:10.00px;color:#e6e6e6;"><use href="#vis"/></svg>
<svg class="i" style="left:0;top:0;width:1024px;height:620px"><path d="M642.50 21.90 l1.80 1.80 l1.80 -1.80" fill="none" stroke="#ccc" stroke-width="1.0" stroke-linecap="round" stroke-linejoin="round"/></svg>
<div class="r " style="left:652.50px;top:17.00px;width:12.00px;height:10.60px;background:#4772b3;border-radius:2.5px 0 0 2.5px;"></div>
<svg class="i" style="left:654.00px;top:17.80px;width:9.00px;height:9.00px;color:#fff;"><use href="#gizmo"/></svg>
<div class="r " style="left:664.80px;top:17.00px;width:11.70px;height:10.60px;background:#282828;border-radius:0 2.5px 2.5px 0;"></div>
<svg class="i" style="left:0;top:0;width:1024px;height:620px"><path d="M668.90 21.90 l1.80 1.80 l1.80 -1.80" fill="none" stroke="#ccc" stroke-width="1.0" stroke-linecap="round" stroke-linejoin="round"/></svg>
<div class="r " style="left:681.50px;top:17.00px;width:11.70px;height:10.60px;background:#4772b3;border-radius:2.5px 0 0 2.5px;"></div>
<svg class="i" style="left:682.55px;top:17.55px;width:9.50px;height:9.50px;color:#fff;"><use href="#overlay"/></svg>
<div class="r " style="left:693.50px;top:17.00px;width:11.00px;height:10.60px;background:#282828;border-radius:0 2.5px 2.5px 0;"></div>
<svg class="i" style="left:0;top:0;width:1024px;height:620px"><path d="M697.20 21.90 l1.80 1.80 l1.80 -1.80" fill="none" stroke="#ccc" stroke-width="1.0" stroke-linecap="round" stroke-linejoin="round"/></svg>
<div class="r " style="left:710.20px;top:17.00px;width:10.60px;height:10.60px;background:#383838;border-radius:2.5px;"></div>
<svg class="i" style="left:711.25px;top:18.05px;width:8.50px;height:8.50px;color:#5c5c5c;"><use href="#xray"/></svg>
<div class="r " style="left:726.00px;top:17.00px;width:12.00px;height:10.60px;background:#565656;border-radius:2.5px 0 0 2.5px;"></div>
<svg class="i" style="left:727.50px;top:17.80px;width:9.00px;height:9.00px;color:#dcdcdc;"><use href="#shwire"/></svg>
<div class="r " style="left:738.30px;top:17.00px;width:11.40px;height:10.60px;background:#565656;"></div>
<svg class="i" style="left:739.50px;top:17.80px;width:9.00px;height:9.00px;color:#d0d0d0;"><use href="#shsolid"/></svg>
<div class="r " style="left:750.00px;top:17.00px;width:11.30px;height:10.60px;background:#4772b3;"></div>
<svg class="i" style="left:751.20px;top:17.80px;width:9.00px;height:9.00px;color:#fff;"><use href="#shmat"/></svg>
<div class="r " style="left:761.60px;top:17.00px;width:11.60px;height:10.60px;background:#565656;"></div>
<svg class="i" style="left:762.90px;top:17.80px;width:9.00px;height:9.00px;color:#b8b8b8;"><use href="#shrend"/></svg>
<div class="r " style="left:773.50px;top:17.00px;width:11.80px;height:10.60px;background:#282828;border-radius:0 2.5px 2.5px 0;"></div>
<svg class="i" style="left:0;top:0;width:1024px;height:620px"><path d="M777.60 21.90 l1.80 1.80 l1.80 -1.80" fill="none" stroke="#ccc" stroke-width="1.0" stroke-linecap="round" stroke-linejoin="round"/></svg>
<div class="r " style="left:6.30px;top:33.00px;width:11.70px;height:11.80px;background:#4772b3;border-radius:2.5px 0 0 2.5px;"></div>
<div class="r " style="left:18.40px;top:33.00px;width:11.30px;height:11.80px;background:#575757;"></div>
<div class="r " style="left:30.00px;top:33.00px;width:11.60px;height:11.80px;background:#575757;"></div>
<div class="r " style="left:42.00px;top:33.00px;width:11.60px;height:11.80px;background:#575757;"></div>
<div class="r " style="left:54.00px;top:33.00px;width:12.00px;height:11.80px;background:#575757;border-radius:0 2.5px 2.5px 0;"></div>
<svg class="i" style="left:0;top:0;width:1024px;height:620px"><g fill="none" stroke="#dfe7f5" stroke-width="0.9" stroke-dasharray="1.4 1"><rect x="8.2" y="34.8" width="8" height="8"/></g><path d="M20.5 38.5h3.6v-3.4h4v5.2h-3.6v3h-4z" fill="#e3e3e3"/><path d="M35.5 35.3h4.6v6.8h-2.4v-4.2h-2.2z" fill="#e3e3e3"/><rect x="31.8" y="38.6" width="5" height="4.6" fill="none" stroke="#aaa" stroke-width=".8" stroke-dasharray="1 1"/><rect x="44.8" y="35.8" width="5.6" height="5.6" fill="none" stroke="#e3e3e3" stroke-width="1.6"/><rect x="46.5" y="37.5" width="5.6" height="5.6" fill="none" stroke="#e3e3e3" stroke-width="1.2"/><rect x="56" y="35" width="8" height="8" fill="none" stroke="#bbb" stroke-width=".8" stroke-dasharray="1 1"/><rect x="58" y="37" width="4" height="4" fill="#e3e3e3"/></svg>
<div id="t26" class="t sh" style="top:51.00px;left:42.00px;color:#f2f2f2;letter-spacing:0.000px;">フロント・平行投影</div>
<div id="t27" class="t sh" style="top:62.70px;left:42.00px;color:#f2f2f2;letter-spacing:0.026px;"><span class="l">(166)</span> シーンコレクション <span class="l">| Armature</span></div>
<div id="t28" class="t sh" style="top:74.00px;left:42.00px;color:#f2f2f2;letter-spacing:-0.054px;"><span class="l">10</span>センチメートル</div>
<div id="t29" class="t sh" style="top:92.00px;left:42.00px;color:#f2f2f2;letter-spacing:0.022px;white-space:pre;">オブジェクト   <span class="l">1 / 4</span></div>
<div class="r " style="left:6.30px;top:52.50px;width:23.70px;height:21.30px;background:#4772b3;border-radius:3px 3px 0 0;"></div>
<div class="r " style="left:6.30px;top:74.60px;width:23.70px;height:21.60px;background:rgba(34,34,34,0.95);border-radius:0 0 3px 3px;"></div>
<div class="r " style="left:6.30px;top:100.50px;width:23.70px;height:20.90px;background:rgba(34,34,34,0.95);border-radius:3px 3px 0 0;"></div>
<div class="r " style="left:6.30px;top:122.40px;width:23.70px;height:21.40px;background:rgba(34,34,34,0.95);border-radius:0;"></div>
<div class="r " style="left:6.30px;top:144.90px;width:23.70px;height:20.90px;background:rgba(34,34,34,0.95);border-radius:0;"></div>
<div class="r " style="left:6.30px;top:166.90px;width:23.70px;height:21.10px;background:rgba(34,34,34,0.95);border-radius:0 0 3px 3px;"></div>
<div class="r " style="left:6.30px;top:192.60px;width:23.70px;height:21.60px;background:rgba(34,34,34,0.95);border-radius:3px 3px 0 0;"></div>
<div class="r " style="left:6.30px;top:215.20px;width:23.70px;height:21.30px;background:rgba(34,34,34,0.95);border-radius:0 0 3px 3px;"></div>
<div class="r " style="left:6.30px;top:240.80px;width:23.70px;height:21.20px;background:rgba(34,34,34,0.95);border-radius:3.0px;"></div>
<svg class="i" style="left:0;top:0;width:1024px;height:620px" viewBox="0 0 1024 620"><rect x="11.8" y="56.2" width="12.8" height="13.4" rx="1.5" fill="none" stroke="#f0b44a" stroke-width="1.2" stroke-dasharray="3 1.6"/><path d="M15.8 59.2l6.2 3.8-2.6.7 1.2 2.7-1.2.6-1.3-2.8-2.3 1.7z" fill="#fff"/><path d="M27.5 72.6l1.6-1.6v1.6z" fill="#9db5dd"/><circle cx="18.2" cy="85.4" r="5.4" fill="none" stroke="#cfcfcf" stroke-width="0.9"/><circle cx="18.2" cy="85.4" r="5.4" fill="none" stroke="#d84848" stroke-width="0.9" stroke-dasharray="2.1 2.1"/><path d="M18.2 77.8v4.2M18.2 88.8v4.2M10.6 85.4h4.2M21.6 85.4h4.2" stroke="#cfcfcf" stroke-width="0.7"/><g fill="none" stroke="#cfcfcf" stroke-width="0.85"><path d="M18.2 104.5v13M11.6 111h13.2"/></g><g fill="#cfcfcf"><path d="M18.2 103l2.3 3h-4.6z"/><path d="M18.2 119l2.3-3h-4.6z"/><path d="M10.2 111l3-2.3v4.6z"/><path d="M26.2 111l-3-2.3v4.6z"/></g><g fill="none" stroke="#cfcfcf" stroke-width="0.85"><path d="M12.3 131.2a6.2 6.2 0 0 1 11.8 0M24.1 135.2a6.2 6.2 0 0 1-11.8 0"/></g><g fill="#cfcfcf"><path d="M10.6 133.6l1.6-3 1.8 2.4z"/><path d="M25.8 132.8l-1.6 3-1.8-2.4z"/><circle cx="18.2" cy="133.2" r="1.7"/></g><rect x="12.2" y="149" width="12" height="12.4" fill="none" stroke="#cfcfcf" stroke-width="1"/><rect x="12.2" y="155.6" width="6" height="5.8" fill="#cfcfcf"/><path d="M19 154.6l3.6-3.6m-2.4 0h2.4v2.4" stroke="#cfcfcf" stroke-width="1" fill="none"/><path d="M27.5 164.6l1.6-1.6v1.6z" fill="#999"/><circle cx="18.2" cy="177.4" r="6" fill="none" stroke="#cfcfcf" stroke-width="1"/><rect x="15.2" y="174.4" width="6" height="6" fill="#cfcfcf"/><g fill="#cfcfcf"><path d="M18.2 169.6l1.6 2h-3.2z"/><path d="M18.2 185.2l1.6-2h-3.2z"/><path d="M10.4 177.4l2-1.6v3.2z"/><path d="M26 177.4l-2-1.6v3.2z"/></g><path d="M11.5 207.5c2-3.5 4-3.5 5.5-1.5s3.5 2 6.5-.5" fill="none" stroke="#7fd6b0" stroke-width="1.2"/><path d="M13.5 203.8l7-7 2 2-7 7-2.6.6z" fill="#cfcfcf"/><path d="M27.5 213l1.6-1.6v1.6z" fill="#999"/><path d="M12.5 219.5v13h13" fill="none" stroke="#cfcfcf" stroke-width="1.8"/><path d="M14 231v-7.5a7.5 7.5 0 0 1 7.5 7.5z" fill="#7fd6b0"/><g fill="none" stroke="#7fd6b0" stroke-width="1.1" stroke-linejoin="round"><path d="M13.5 249.5l3-3h8v8l-3 3h-8z"/><path d="M13.5 249.5h8v8M21.5 249.5l3-3"/></g><path d="M11.6 243v4.4M9.4 245.2h4.4" stroke="#7fd6b0" stroke-width="1.1"/><path d="M27.5 260.8l1.6-1.6v1.6z" fill="#999"/></svg>
<svg class="i" style="left:0;top:0;width:1024px;height:620px" viewBox="0 0 1024 620"><path d="M508.7 79.0H538.7" stroke="#d83a52" stroke-width="1.4"/><path d="M523.6 63.9V93.9" stroke="#3a82d8" stroke-width="1.4"/><circle cx="503.5" cy="79.0" r="4.7" fill="#6b3a44" stroke="#d83a52" stroke-width="1"/><circle cx="523.6" cy="99.1" r="4.7" fill="#3d5a80" stroke="#3a82d8" stroke-width="1"/><circle cx="543.7" cy="79.0" r="5.2" fill="#e23a55"/><circle cx="523.6" cy="58.9" r="5.2" fill="#3a85de"/><circle cx="523.6" cy="79.0" r="5.5" fill="#8fd816"/><g font-family="Liberation Sans, sans-serif" font-size="6.6" font-weight="bold" text-anchor="middle" fill="#111"><text x="543.7" y="81.4">X</text><text x="523.6" y="61.3">Z</text><text x="523.3" y="81.3" font-size="6.2">-Y</text></g><circle cx="541.5" cy="113.2" r="7.8" fill="rgba(38,38,38,0.92)"/><circle cx="541.5" cy="132.7" r="7.8" fill="rgba(38,38,38,0.92)"/><circle cx="541.5" cy="152.3" r="7.8" fill="rgba(38,38,38,0.92)"/><circle cx="541.5" cy="171.0" r="7.8" fill="rgba(38,38,38,0.92)"/><circle cx="542.8" cy="112" r="3.2" fill="#cfcfcf"/><path d="M540.4 114.6l-3.4 3.4" stroke="#cfcfcf" stroke-width="1.6" stroke-linecap="round"/><path d="M542.8 110.4v3.2M541.2 112h3.2" stroke="#333" stroke-width=".8"/><g stroke="#e6e6e6" stroke-width="1.25" stroke-linecap="round" fill="none"><path d="M539.2 132.6v-4.2M541 131.8v-5.6M542.9 131.8v-5.2M544.7 132.4v-3.8M537.4 132.2l1.6 2.6"/></g><path d="M538.6 132h6.8v2.2c0 2.4-1.2 3.8-3.2 3.8h-.8c-1.4 0-2.2-.8-2.8-2.2z" fill="#e6e6e6"/><g fill="none" stroke="#e6e6e6" stroke-width="1"><circle cx="539.4" cy="149.6" r="2.1"/><circle cx="543.9" cy="150.3" r="1.6"/><rect x="537.4" y="152.6" width="6.6" height="3.8" rx=".9"/><path d="M544.2 153.8l2.3-1v3.4l-2.3-1"/></g><g fill="none" stroke="#cfcfcf" stroke-width=".9"><rect x="537.2" y="166.7" width="8.6" height="8.6" rx=".8"/><path d="M540.1 166.7v8.6M542.9 166.7v8.6M537.2 169.6h8.6M537.2 172.4h8.6"/></g></svg>
<div class="r " style="left:731.80px;top:30.80px;width:59.80px;height:16.40px;background:rgba(46,46,46,0.95);border-radius:0 0 0 4px;"></div>
<div class="r " style="left:737.50px;top:33.70px;width:48.50px;height:10.60px;background:#282828;border-radius:2.5px;"></div>
<div id="t30" class="t " style="top:33.00px;left:743.50px;letter-spacing:-0.200px;">オプション</div>
<svg class="i" style="left:0;top:0;width:1024px;height:620px"><path d="M780.20 38.40 l1.80 1.80 l1.80 -1.80" fill="none" stroke="#ccc" stroke-width="1.0" stroke-linecap="round" stroke-linejoin="round"/></svg>
<div class="r " style="left:778.60px;top:47.00px;width:13.00px;height:521.80px;background:#1c1c1c;border-radius:0 0 4px 0;"></div>
<div class="r " style="left:560.60px;top:47.00px;width:218.00px;height:247.80px;background:#3a3a3a;border-radius:3px 0 0 3px;"></div>
<div class="r " style="left:560.60px;top:296.80px;width:218.00px;height:38.50px;background:#3a3a3a;border-radius:3px 0 0 3px;"></div>
<div class="r " style="left:778.00px;top:50.00px;width:11.30px;height:38.80px;background:#3a3a3a;border-radius:0 3px 3px 0;"></div>
<div class="r " style="left:778.60px;top:91.00px;width:10.70px;height:32.00px;background:#2a2a2a;border-radius:0 3px 3px 0;border:0.7px solid #3a3a3a;border-left:none;"></div>
<div class="r " style="left:778.60px;top:125.50px;width:10.70px;height:29.50px;background:#2a2a2a;border-radius:0 3px 3px 0;border:0.7px solid #3a3a3a;border-left:none;"></div>
<div class="t" style="left:778.2px;top:69.5px;writing-mode:vertical-rl;text-orientation:sideways;height:auto;line-height:11px;width:11px;color:#f0f0f0;font-size:6.9px;transform:translateY(-50%)">アイテム</div>
<div class="t" style="left:778.2px;top:107.0px;writing-mode:vertical-rl;text-orientation:sideways;height:auto;line-height:11px;width:11px;color:#d8d8d8;font-size:6.9px;transform:translateY(-50%)">ツール</div>
<div class="t" style="left:778.2px;top:140.3px;writing-mode:vertical-rl;text-orientation:sideways;height:auto;line-height:11px;width:11px;color:#d8d8d8;font-size:6.9px;transform:translateY(-50%)">ビュー</div>
<svg class="i" style="left:0;top:0;width:1024px;height:620px"><path d="M566.50 55.35 l2.10 2.10 l2.10 -2.10" fill="none" stroke="#ddd" stroke-width="1.0" stroke-linecap="round" stroke-linejoin="round"/></svg>
<div id="t31" class="t " style="top:50.20px;left:574.00px;letter-spacing:0.043px;">トランスフォーム</div>
<svg class="i" style="left:0;top:0;width:1024px;height:620px"><path d="M566.50 304.15 l2.10 2.10 l2.10 -2.10" fill="none" stroke="#ddd" stroke-width="1.0" stroke-linecap="round" stroke-linejoin="round"/></svg>
<div id="t32" class="t " style="top:299.00px;left:574.00px;letter-spacing:-0.019px;">プロパティ</div>
<svg class="i" style="left:763.0px;top:54.0px;width:8px;height:4px" viewBox="0 0 8 4"><g fill="#5a5a5a"><circle cx="1" cy="1" r=".55"/><circle cx="3" cy="1" r=".55"/><circle cx="5" cy="1" r=".55"/><circle cx="7" cy="1" r=".55"/><circle cx="1" cy="3" r=".55"/><circle cx="3" cy="3" r=".55"/><circle cx="5" cy="3" r=".55"/><circle cx="7" cy="3" r=".55"/></g></svg>
<svg class="i" style="left:763.0px;top:303.0px;width:8px;height:4px" viewBox="0 0 8 4"><g fill="#5a5a5a"><circle cx="1" cy="1" r=".55"/><circle cx="3" cy="1" r=".55"/><circle cx="5" cy="1" r=".55"/><circle cx="7" cy="1" r=".55"/><circle cx="1" cy="3" r=".55"/><circle cx="3" cy="3" r=".55"/><circle cx="5" cy="3" r=".55"/><circle cx="7" cy="3" r=".55"/></g></svg>
<div id="t33" class="t " style="top:69.80px;left:566.00px;">位置<span class="l">:</span></div>
<div class="r " style="left:566.00px;top:83.00px;width:157.40px;height:11.30px;background:#545454;border-radius:2.5px 2.5px 0 0;"></div>
<div id="t34" class="t " style="top:82.90px;left:575.30px;color:#e6e6e6;"><span class="l">X</span></div>
<div id="t35" class="t " style="top:82.90px;right:309.20px;color:#e6e6e6;"><span class="l">0 m</span></div>
<svg class="i" style="left:744.55px;top:83.85px;width:9.50px;height:9.50px;color:#c8c8c8;"><use href="#lock"/></svg>
<div class="r " style="left:566.00px;top:95.45px;width:157.40px;height:11.30px;background:#545454;"></div>
<div id="t36" class="t " style="top:95.35px;left:575.30px;color:#e6e6e6;"><span class="l">Y</span></div>
<div id="t37" class="t " style="top:95.35px;right:309.20px;color:#e6e6e6;"><span class="l">0 m</span></div>
<svg class="i" style="left:744.55px;top:96.30px;width:9.50px;height:9.50px;color:#c8c8c8;"><use href="#lock"/></svg>
<div class="r " style="left:566.00px;top:107.90px;width:157.40px;height:11.30px;background:#545454;border-radius:0 0 2.5px 2.5px;"></div>
<div id="t38" class="t " style="top:107.80px;left:575.30px;color:#e6e6e6;"><span class="l">Z</span></div>
<div id="t39" class="t " style="top:107.80px;right:309.20px;color:#e6e6e6;"><span class="l">0 m</span></div>
<svg class="i" style="left:744.55px;top:108.75px;width:9.50px;height:9.50px;color:#c8c8c8;"><use href="#lock"/></svg>
<div id="t40" class="t " style="top:122.00px;left:566.00px;">回転<span class="l">:</span></div>
<div class="r " style="left:566.00px;top:135.00px;width:157.40px;height:11.30px;background:#545454;border-radius:2.5px 2.5px 0 0;"></div>
<div id="t41" class="t " style="top:134.90px;left:575.30px;color:#e6e6e6;"><span class="l">X</span></div>
<div id="t42" class="t " style="top:134.90px;right:309.20px;color:#e6e6e6;"><span class="l">0</span>°</div>
<svg class="i" style="left:744.55px;top:135.85px;width:9.50px;height:9.50px;color:#c8c8c8;"><use href="#lock"/></svg>
<div class="r " style="left:566.00px;top:147.45px;width:157.40px;height:11.30px;background:#545454;"></div>
<div id="t43" class="t " style="top:147.35px;left:575.30px;color:#e6e6e6;"><span class="l">Y</span></div>
<div id="t44" class="t " style="top:147.35px;right:309.20px;color:#e6e6e6;"><span class="l">0</span>°</div>
<svg class="i" style="left:744.55px;top:148.30px;width:9.50px;height:9.50px;color:#c8c8c8;"><use href="#lock"/></svg>
<div class="r " style="left:566.00px;top:159.90px;width:157.40px;height:11.30px;background:#545454;border-radius:0 0 2.5px 2.5px;"></div>
<div id="t45" class="t " style="top:159.80px;left:575.30px;color:#e6e6e6;"><span class="l">Z</span></div>
<div id="t46" class="t " style="top:159.80px;right:309.20px;color:#e6e6e6;"><span class="l">0</span>°</div>
<svg class="i" style="left:744.55px;top:160.75px;width:9.50px;height:9.50px;color:#c8c8c8;"><use href="#lock"/></svg>
<div class="r " style="left:566.00px;top:174.50px;width:202.00px;height:10.70px;background:#282828;border-radius:2.5px;"></div>
<div id="t47" class="t " style="top:174.00px;left:570.50px;letter-spacing:-0.144px;"><span class="l">XYZ</span> オイラー角</div>
<svg class="i" style="left:0;top:0;width:1024px;height:620px"><path d="M762.20 179.40 l1.80 1.80 l1.80 -1.80" fill="none" stroke="#ccc" stroke-width="1.0" stroke-linecap="round" stroke-linejoin="round"/></svg>
<div id="t48" class="t " style="top:188.30px;left:566.00px;">スケール<span class="l">:</span></div>
<div class="r " style="left:566.00px;top:201.20px;width:157.40px;height:11.30px;background:#545454;border-radius:2.5px 2.5px 0 0;"></div>
<div id="t49" class="t " style="top:201.10px;left:575.30px;color:#e6e6e6;"><span class="l">X</span></div>
<div id="t50" class="t " style="top:201.10px;right:309.20px;color:#e6e6e6;"><span class="l">1.000</span></div>
<svg class="i" style="left:744.55px;top:202.05px;width:9.50px;height:9.50px;color:#c8c8c8;"><use href="#lock"/></svg>
<div class="r " style="left:566.00px;top:213.65px;width:157.40px;height:11.30px;background:#545454;"></div>
<div id="t51" class="t " style="top:213.55px;left:575.30px;color:#e6e6e6;"><span class="l">Y</span></div>
<div id="t52" class="t " style="top:213.55px;right:309.20px;color:#e6e6e6;"><span class="l">1.000</span></div>
<svg class="i" style="left:744.55px;top:214.50px;width:9.50px;height:9.50px;color:#c8c8c8;"><use href="#lock"/></svg>
<div class="r " style="left:566.00px;top:226.10px;width:157.40px;height:11.30px;background:#545454;border-radius:0 0 2.5px 2.5px;"></div>
<div id="t53" class="t " style="top:226.00px;left:575.30px;color:#e6e6e6;"><span class="l">Z</span></div>
<div id="t54" class="t " style="top:226.00px;right:309.20px;color:#e6e6e6;"><span class="l">1.000</span></div>
<svg class="i" style="left:744.55px;top:226.95px;width:9.50px;height:9.50px;color:#c8c8c8;"><use href="#lock"/></svg>
<div id="t55" class="t " style="top:240.30px;left:566.00px;">寸法<span class="l">:</span></div>
<div class="r " style="left:566.00px;top:253.20px;width:202.00px;height:11.30px;background:#545454;border-radius:2.5px 2.5px 0 0;"></div>
<div id="t56" class="t " style="top:253.10px;left:575.30px;color:#e6e6e6;"><span class="l">X</span></div>
<div id="t57" class="t " style="top:253.10px;right:264.60px;color:#e6e6e6;"><span class="l">1.41 m</span></div>
<div class="r " style="left:566.00px;top:265.65px;width:202.00px;height:11.30px;background:#545454;"></div>
<div id="t58" class="t " style="top:265.55px;left:575.30px;color:#e6e6e6;"><span class="l">Y</span></div>
<div id="t59" class="t " style="top:265.55px;right:264.60px;color:#e6e6e6;"><span class="l">0.196 m</span></div>
<div class="r " style="left:566.00px;top:278.10px;width:202.00px;height:11.30px;background:#545454;border-radius:0 0 2.5px 2.5px;"></div>
<div id="t60" class="t " style="top:278.00px;left:575.30px;color:#e6e6e6;"><span class="l">Z</span></div>
<div id="t61" class="t " style="top:278.00px;right:264.60px;color:#e6e6e6;"><span class="l">1.67 m</span></div>
<div id="t62" class="t " style="top:318.30px;right:380.20px;letter-spacing:-0.101px;"><span class="l">ant_landscape</span></div>
<div class="r " style="left:650.00px;top:318.80px;width:118.00px;height:11.20px;background:#545454;border-radius:2.5px;"></div>
<div id="t63" class="t " style="top:318.30px;left:709.00px;transform:translateX(-50%);">値を編集</div>
<div class="r " style="left:2.00px;top:570.40px;width:789.60px;height:16.80px;background:#303030;border-radius:4.0px;"></div>
<div class="r " style="left:7.00px;top:573.40px;width:18.60px;height:10.60px;background:#282828;border-radius:2.5px;"></div>
<svg class="i" style="left:8.00px;top:573.60px;width:10.00px;height:10.00px;color:#e6e6e6;"><use href="#asset"/></svg>
<svg class="i" style="left:0;top:0;width:1024px;height:620px"><path d="M19.70 578.10 l1.80 1.80 l1.80 -1.80" fill="none" stroke="#ccc" stroke-width="1.0" stroke-linecap="round" stroke-linejoin="round"/></svg>
<div id="t64" class="t " style="top:572.50px;left:34.00px;letter-spacing:-0.133px;">ビュー</div>
<div id="t65" class="t " style="top:572.50px;left:64.50px;letter-spacing:-0.250px;">選択</div>
<div id="t66" class="t " style="top:572.50px;left:87.90px;letter-spacing:-0.175px;">カタログ</div>
<div id="t67" class="t " style="top:572.50px;left:125.00px;letter-spacing:-0.144px;">アセット</div>
<div class="r " style="left:624.30px;top:573.40px;width:17.20px;height:10.60px;background:#282828;border-radius:2.5px;"></div>
<svg class="i" style="left:626.00px;top:574.10px;width:9.00px;height:9.00px;color:#e0e0e0;"><use href="#grid4"/></svg>
<svg class="i" style="left:0;top:0;width:1024px;height:620px"><path d="M636.00 578.10 l1.80 1.80 l1.80 -1.80" fill="none" stroke="#ccc" stroke-width="1.0" stroke-linecap="round" stroke-linejoin="round"/></svg>
<div class="r " style="left:646.60px;top:573.40px;width:100.40px;height:10.60px;background:#1d1d1d;border-radius:2.5px;"></div>
<svg class="i" style="left:649.25px;top:574.35px;width:8.50px;height:8.50px;color:#dcdcdc;"><use href="#search"/></svg>
<div id="t68" class="t " style="top:572.60px;left:663.00px;color:#777;">検索</div>
<div class="r " style="left:752.00px;top:573.40px;width:18.50px;height:10.60px;background:#282828;border-radius:2.5px;"></div>
<svg class="i" style="left:754.25px;top:574.35px;width:8.50px;height:8.50px;color:#e0e0e0;"><use href="#filter"/></svg>
<svg class="i" style="left:0;top:0;width:1024px;height:620px"><path d="M764.70 578.10 l1.80 1.80 l1.80 -1.80" fill="none" stroke="#ccc" stroke-width="1.0" stroke-linecap="round" stroke-linejoin="round"/></svg>
<div class="r " style="left:774.80px;top:573.40px;width:11.90px;height:10.60px;background:#4772b3;border-radius:2.5px;"></div>
<svg class="i" style="left:776.45px;top:574.35px;width:8.50px;height:8.50px;color:#fff;"><use href="#gear"/></svg>
<div class="r " style="left:2.00px;top:589.70px;width:789.60px;height:15.00px;background:#303030;border-radius:4px 4px 0 0;"></div>
<div class="r " style="left:7.00px;top:592.30px;width:18.60px;height:10.70px;background:#282828;border-radius:2.5px;"></div>
<svg class="i" style="left:8.25px;top:592.95px;width:9.50px;height:9.50px;color:#e6e6e6;"><use href="#dope"/></svg>
<svg class="i" style="left:0;top:0;width:1024px;height:620px"><path d="M19.70 597.10 l1.80 1.80 l1.80 -1.80" fill="none" stroke="#ccc" stroke-width="1.0" stroke-linecap="round" stroke-linejoin="round"/></svg>
<div class="r " style="left:29.30px;top:592.30px;width:102.70px;height:10.70px;background:#282828;border-radius:2.5px;"></div>
<svg class="i" style="left:32.25px;top:592.95px;width:9.50px;height:9.50px;color:#e6e6e6;"><use href="#dope"/></svg>
<div id="t69" class="t " style="top:591.40px;left:46.00px;letter-spacing:0.068px;">ドープシート</div>
<svg class="i" style="left:0;top:0;width:1024px;height:620px"><path d="M125.50 597.10 l1.80 1.80 l1.80 -1.80" fill="none" stroke="#ccc" stroke-width="1.0" stroke-linecap="round" stroke-linejoin="round"/></svg>
<div id="t70" class="t " style="top:591.40px;left:138.70px;letter-spacing:0.000px;">ビュー</div>
<div id="t71" class="t " style="top:591.40px;left:170.00px;letter-spacing:-0.200px;">選択</div>
<div id="t72" class="t " style="top:591.40px;left:194.00px;letter-spacing:-0.250px;">マーカー</div>
<div id="t73" class="t " style="top:591.40px;left:231.00px;letter-spacing:-0.039px;">チャンネル</div>
<div id="t74" class="t " style="top:591.40px;left:275.40px;letter-spacing:-0.200px;">キー</div>
<div class="r " style="left:661.00px;top:592.30px;width:11.00px;height:10.70px;background:#4772b3;border-radius:2.5px 0 0 2.5px;"></div>
<svg class="i" style="left:662.35px;top:593.45px;width:8.50px;height:8.50px;color:#fff;"><use href="#arrow"/></svg>
<div class="r " style="left:672.30px;top:592.30px;width:11.10px;height:10.70px;background:#565656;"></div>
<svg class="i" style="left:673.55px;top:593.45px;width:8.50px;height:8.50px;color:#ccc;"><use href="#selbox"/></svg>
<div class="r " style="left:683.70px;top:592.30px;width:13.70px;height:10.70px;background:#565656;border-radius:0 2.5px 2.5px 0;"></div>
<svg class="i" style="left:686.00px;top:593.20px;width:9.00px;height:9.00px;color:#e8e8e8;"><use href="#warn"/></svg>
<div class="r " style="left:702.40px;top:592.30px;width:18.30px;height:10.70px;background:#282828;border-radius:2.5px;"></div>
<svg class="i" style="left:704.75px;top:593.45px;width:8.50px;height:8.50px;color:#e0e0e0;"><use href="#filter"/></svg>
<svg class="i" style="left:0;top:0;width:1024px;height:620px"><path d="M715.00 597.10 l1.80 1.80 l1.80 -1.80" fill="none" stroke="#ccc" stroke-width="1.0" stroke-linecap="round" stroke-linejoin="round"/></svg>
<div class="r " style="left:725.80px;top:592.30px;width:11.70px;height:10.70px;background:#4772b3;border-radius:2.5px 0 0 2.5px;"></div>
<svg class="i" style="left:727.35px;top:593.45px;width:8.50px;height:8.50px;color:#fff;transform:rotate(40deg);"><use href="#magnet"/></svg>
<div class="r " style="left:737.80px;top:592.30px;width:11.60px;height:10.70px;background:#282828;border-radius:0 2.5px 2.5px 0;"></div>
<svg class="i" style="left:0;top:0;width:1024px;height:620px"><path d="M741.80 597.10 l1.80 1.80 l1.80 -1.80" fill="none" stroke="#ccc" stroke-width="1.0" stroke-linecap="round" stroke-linejoin="round"/></svg>
<div class="r " style="left:754.00px;top:592.30px;width:11.90px;height:10.70px;background:#565656;border-radius:2.5px 0 0 2.5px;"></div>
<svg class="i" style="left:755.50px;top:593.20px;width:9.00px;height:9.00px;color:#a0a0a0;"><use href="#prop"/></svg>
<div class="r " style="left:766.20px;top:592.30px;width:19.50px;height:10.70px;background:#2b2b2b;border-radius:0 2.5px 2.5px 0;"></div>
<svg class="i" style="left:768.00px;top:593.20px;width:9.00px;height:9.00px;color:#5a5a5a;"><use href="#falloff"/></svg>
<svg class="i" style="left:0;top:0;width:1024px;height:620px"><path d="M779.40 597.10 l1.80 1.80 l1.80 -1.80" fill="none" stroke="#5a5a5a" stroke-width="1.0" stroke-linecap="round" stroke-linejoin="round"/></svg>
<svg class="i" style="left:5.25px;top:607.05px;width:9.50px;height:9.50px;color:#a8a8a8;"><use href="#mouse"/></svg>
<div class="r " style="left:7.60px;top:607.80px;width:2.40px;height:3.20px;background:#a8a8a8;border-radius:2px 0 0 0;"></div>
<div id="t75" class="t " style="top:605.80px;left:17.60px;color:#999;letter-spacing:-0.300px;">選択</div>
<svg class="i" style="left:36.25px;top:607.05px;width:9.50px;height:9.50px;color:#a8a8a8;"><use href="#mouse"/></svg>
<div class="r " style="left:40.00px;top:608.60px;width:2.00px;height:2.80px;background:#a8a8a8;border-radius:1.0px;"></div>
<div id="t76" class="t " style="top:605.80px;left:47.70px;color:#999;letter-spacing:0.000px;">ビューを回転</div>
<svg class="i" style="left:94.05px;top:607.05px;width:9.50px;height:9.50px;color:#a8a8a8;"><use href="#mouse"/></svg>
<div class="r " style="left:98.80px;top:607.80px;width:2.40px;height:3.20px;background:#a8a8a8;border-radius:0 2px 0 0;"></div>
<div id="t77" class="t " style="top:605.80px;left:106.00px;color:#999;letter-spacing:-0.067px;">オブジェクト</div>
<div class="r" style="left:793.8px;top:14.6px;width:228.4px;height:281.2px;background:#282828;border-radius:4px;overflow:hidden">
</div>
<div class="r " style="left:793.80px;top:14.60px;width:228.40px;height:16.20px;background:#2b2b2b;border-radius:4px 4px 0 0;"></div>
<div class="r " style="left:799.00px;top:17.20px;width:20.00px;height:10.60px;background:#2a2a2a;border-radius:2.5px;border:0.6px solid #3a3a3a;"></div>
<svg class="i" style="left:801.25px;top:17.75px;width:9.50px;height:9.50px;color:#e6e6e6;"><use href="#outl"/></svg>
<svg class="i" style="left:0;top:0;width:1024px;height:620px"><path d="M813.20 22.00 l1.80 1.80 l1.80 -1.80" fill="none" stroke="#ccc" stroke-width="1.0" stroke-linecap="round" stroke-linejoin="round"/></svg>
<div class="r " style="left:823.50px;top:17.20px;width:18.50px;height:10.60px;background:#2a2a2a;border-radius:2.5px;border:0.6px solid #3a3a3a;"></div>
<svg class="i" style="left:825.25px;top:17.75px;width:9.50px;height:9.50px;color:#dcdcdc;"><use href="#vlayer"/></svg>
<svg class="i" style="left:0;top:0;width:1024px;height:620px"><path d="M836.20 22.00 l1.80 1.80 l1.80 -1.80" fill="none" stroke="#ccc" stroke-width="1.0" stroke-linecap="round" stroke-linejoin="round"/></svg>
<div class="r " style="left:864.00px;top:17.20px;width:75.00px;height:10.60px;background:#1d1d1d;border-radius:2.5px;"></div>
<svg class="i" style="left:866.55px;top:18.25px;width:8.50px;height:8.50px;color:#dcdcdc;"><use href="#search"/></svg>
<div id="t78" class="t " style="top:16.60px;left:879.30px;color:#6f6f6f;">検索</div>
<div class="r " style="left:982.50px;top:17.20px;width:19.50px;height:10.60px;background:#2a2a2a;border-radius:2.5px;border:0.6px solid #3a3a3a;"></div>
<svg class="i" style="left:984.75px;top:18.25px;width:8.50px;height:8.50px;color:#e0e0e0;"><use href="#filter"/></svg>
<svg class="i" style="left:0;top:0;width:1024px;height:620px"><path d="M995.80 22.00 l1.80 1.80 l1.80 -1.80" fill="none" stroke="#ccc" stroke-width="1.0" stroke-linecap="round" stroke-linejoin="round"/></svg>
<div class="r " style="left:1005.50px;top:17.20px;width:12.50px;height:10.60px;background:#565656;border-radius:2.5px;"></div>
<svg class="i" style="left:1007.30px;top:18.00px;width:9.00px;height:9.00px;color:#e6e6e6;"><use href="#newcol"/></svg>
<div class="r " style="left:793.80px;top:43.89px;width:228.40px;height:12.74px;background:#2b2b2b;"></div>
<div class="r " style="left:793.80px;top:69.37px;width:228.40px;height:12.74px;background:#2b2b2b;"></div>
<div class="r " style="left:793.80px;top:94.85px;width:228.40px;height:12.74px;background:#2b2b2b;"></div>
<div class="r " style="left:793.80px;top:120.33px;width:228.40px;height:12.74px;background:#2b2b2b;"></div>
<div class="r " style="left:793.80px;top:145.81px;width:228.40px;height:12.74px;background:#2b2b2b;"></div>
<div class="r " style="left:793.80px;top:171.29px;width:228.40px;height:12.74px;background:#2b2b2b;"></div>
<div class="r " style="left:793.80px;top:196.77px;width:228.40px;height:12.74px;background:#2b2b2b;"></div>
<div class="r " style="left:793.80px;top:222.25px;width:228.40px;height:12.74px;background:#2b2b2b;"></div>
<div class="r " style="left:793.80px;top:247.73px;width:228.40px;height:12.74px;background:#2b2b2b;"></div>
<div class="r " style="left:793.80px;top:273.21px;width:228.40px;height:12.74px;background:#2b2b2b;"></div>
<div class="r " style="left:793.80px;top:260.47px;width:228.40px;height:12.74px;background:#2f4a80;"></div>
<div class="r " style="left:811.70px;top:57.63px;width:0.80px;height:36.22px;background:#4a4a4a;"></div>
<div class="r " style="left:811.70px;top:146.81px;width:0.80px;height:112.66px;background:#444;"></div>
<div class="r " style="left:806.20px;top:31.62px;width:12.00px;height:11.80px;background:#4a4a4a;border-radius:2.5px;"></div>
<svg class="i" style="left:807.40px;top:32.72px;width:9.60px;height:9.60px;color:#e8e8e8;"><use href="#coll"/></svg>
<div id="t79" class="t " style="top:31.52px;left:821.50px;letter-spacing:-0.040px;">シーンコレクション</div>
<svg class="i" style="left:0;top:0;width:1024px;height:620px"><path d="M810.70 49.16 l2.20 2.20 l2.20 -2.20" fill="none" stroke="#c8c8c8" stroke-width="1.0" stroke-linecap="round" stroke-linejoin="round"/></svg>
<svg class="i" style="left:820.50px;top:45.26px;width:10.00px;height:10.00px;color:#e8e8e8;"><use href="#coll"/></svg>
<div id="t80" class="t " style="top:45.16px;left:833.80px;color:#e8e8e8;letter-spacing:-0.114px;"><span class="l">mesh</span></div>
<svg class="i" style="left:968.00px;top:45.96px;width:8.60px;height:8.60px;color:#e8e8e8;"><use href="#chk"/></svg>
<svg class="i" style="left:980.50px;top:45.96px;width:8.60px;height:8.60px;color:#e8e8e8;"><use href="#arrow"/></svg>
<svg class="i" style="left:992.90px;top:45.46px;width:9.60px;height:9.60px;color:#e8e8e8;"><use href="#eye"/></svg>
<svg class="i" style="left:1005.90px;top:45.46px;width:9.60px;height:9.60px;color:#e8e8e8;"><use href="#cam"/></svg>
<svg class="i" style="left:0;top:0;width:1024px;height:620px"><path d="M824.40 60.80 l2.20 2.20 l-2.20 2.20" fill="none" stroke="#c8c8c8" stroke-width="1.0" stroke-linecap="round" stroke-linejoin="round"/></svg>
<svg class="i" style="left:832.70px;top:58.40px;width:9.60px;height:9.60px;color:#e8954a;"><use href="#mesh"/></svg>
<div id="t81" class="t " style="top:57.90px;left:846.40px;color:#e8e8e8;letter-spacing:0.052px;"><span class="l">Body</span></div>
<svg class="i" style="left:878.70px;top:58.40px;width:9.20px;height:9.20px;color:#5681c6;"><use href="#wrench"/></svg>
<svg class="i" style="left:891.00px;top:58.50px;width:9.00px;height:9.00px;color:#c9c9c9;"><use href="#parts"/></svg>
<svg class="i" style="left:903.50px;top:58.50px;width:9.60px;height:9.60px;color:#20b283;"><use href="#mdata"/></svg>
<svg class="i" style="left:980.50px;top:58.70px;width:8.60px;height:8.60px;color:#e8e8e8;"><use href="#arrow"/></svg>
<svg class="i" style="left:992.90px;top:58.20px;width:9.60px;height:9.60px;color:#e8e8e8;"><use href="#eye"/></svg>
<svg class="i" style="left:1005.90px;top:58.20px;width:9.60px;height:9.60px;color:#e8e8e8;"><use href="#cam"/></svg>
<svg class="i" style="left:0;top:0;width:1024px;height:620px"><path d="M824.40 73.54 l2.20 2.20 l-2.20 2.20" fill="none" stroke="#c8c8c8" stroke-width="1.0" stroke-linecap="round" stroke-linejoin="round"/></svg>
<svg class="i" style="left:832.70px;top:71.14px;width:9.60px;height:9.60px;color:#e8954a;"><use href="#mesh"/></svg>
<div id="t82" class="t " style="top:70.64px;left:846.40px;color:#e8e8e8;letter-spacing:0.022px;"><span class="l">Body-Headless</span></div>
<svg class="i" style="left:913.40px;top:71.14px;width:9.20px;height:9.20px;color:#5681c6;"><use href="#wrench"/></svg>
<svg class="i" style="left:926.00px;top:71.24px;width:9.00px;height:9.00px;color:#c9c9c9;"><use href="#parts"/></svg>
<svg class="i" style="left:938.20px;top:71.24px;width:9.60px;height:9.60px;color:#20b283;"><use href="#mdata"/></svg>
<svg class="i" style="left:980.50px;top:71.44px;width:8.60px;height:8.60px;color:#e8e8e8;"><use href="#arrow"/></svg>
<svg class="i" style="left:992.90px;top:70.94px;width:9.60px;height:9.60px;color:#e8e8e8;"><use href="#eye"/></svg>
<svg class="i" style="left:1005.90px;top:70.94px;width:9.60px;height:9.60px;color:#e8e8e8;"><use href="#cam"/></svg>
<svg class="i" style="left:0;top:0;width:1024px;height:620px"><path d="M824.40 86.28 l2.20 2.20 l-2.20 2.20" fill="none" stroke="#8a8a8a" stroke-width="1.0" stroke-linecap="round" stroke-linejoin="round"/></svg>
<svg class="i" style="left:832.70px;top:83.88px;width:9.60px;height:9.60px;color:#b5713a;"><use href="#camob"/></svg>
<div id="t83" class="t " style="top:82.68px;left:846.40px;color:#8f8f8f;letter-spacing:-0.083px;">メインカメラ</div>
<svg class="i" style="left:902.50px;top:83.48px;width:10.00px;height:10.00px;color:#1d9570;"><use href="#camdata"/></svg>
<svg class="i" style="left:980.50px;top:84.18px;width:8.60px;height:8.60px;color:#e8e8e8;"><use href="#arrow"/></svg>
<svg class="i" style="left:992.90px;top:84.88px;width:9.60px;height:9.60px;color:#e8e8e8;"><use href="#eyeoff"/></svg>
<svg class="i" style="left:1005.90px;top:83.68px;width:9.60px;height:9.60px;color:#e8e8e8;"><use href="#camoff"/></svg>
<svg class="i" style="left:820.50px;top:96.22px;width:10.00px;height:10.00px;color:#7a7a7a;"><use href="#coll"/></svg>
<div id="t84" class="t " style="top:96.12px;left:833.80px;color:#8f8f8f;letter-spacing:0.031px;"><span class="l">hair.shape</span></div>
<svg class="i" style="left:968.00px;top:96.92px;width:8.60px;height:8.60px;color:#bdbdbd;"><use href="#unchk"/></svg>
<svg class="i" style="left:980.50px;top:96.92px;width:8.60px;height:8.60px;color:#5a5a5a;"><use href="#arrow"/></svg>
<svg class="i" style="left:992.90px;top:96.42px;width:9.60px;height:9.60px;color:#5a5a5a;"><use href="#eye"/></svg>
<svg class="i" style="left:1005.90px;top:96.42px;width:9.60px;height:9.60px;color:#5a5a5a;"><use href="#cam"/></svg>
<svg class="i" style="left:820.50px;top:108.96px;width:10.00px;height:10.00px;color:#7a7a7a;"><use href="#coll"/></svg>
<div id="t85" class="t " style="top:108.86px;left:833.80px;color:#8f8f8f;letter-spacing:0.044px;"><span class="l">hair.curve</span></div>
<svg class="i" style="left:968.00px;top:109.66px;width:8.60px;height:8.60px;color:#bdbdbd;"><use href="#unchk"/></svg>
<svg class="i" style="left:980.50px;top:109.66px;width:8.60px;height:8.60px;color:#5a5a5a;"><use href="#arrow"/></svg>
<svg class="i" style="left:992.90px;top:109.16px;width:9.60px;height:9.60px;color:#5a5a5a;"><use href="#eye"/></svg>
<svg class="i" style="left:1005.90px;top:109.16px;width:9.60px;height:9.60px;color:#5a5a5a;"><use href="#cam"/></svg>
<svg class="i" style="left:0;top:0;width:1024px;height:620px"><path d="M811.80 124.50 l2.20 2.20 l-2.20 2.20" fill="none" stroke="#c8c8c8" stroke-width="1.0" stroke-linecap="round" stroke-linejoin="round"/></svg>
<svg class="i" style="left:820.50px;top:121.70px;width:10.00px;height:10.00px;color:#e8e8e8;"><use href="#coll"/></svg>
<div id="t86" class="t " style="top:121.60px;left:833.80px;color:#e8e8e8;letter-spacing:-0.007px;"><span class="l">hair.mesh</span></div>
<svg class="i" style="left:881.20px;top:122.10px;width:9.60px;height:9.60px;color:#e8954a;"><use href="#mesh"/></svg>
<svg class="i" style="left:968.00px;top:122.40px;width:8.60px;height:8.60px;color:#e8e8e8;"><use href="#chk"/></svg>
<svg class="i" style="left:980.50px;top:122.40px;width:8.60px;height:8.60px;color:#e8e8e8;"><use href="#arrow"/></svg>
<svg class="i" style="left:992.90px;top:121.90px;width:9.60px;height:9.60px;color:#e8e8e8;"><use href="#eye"/></svg>
<svg class="i" style="left:1005.90px;top:121.90px;width:9.60px;height:9.60px;color:#e8e8e8;"><use href="#cam"/></svg>
<svg class="i" style="left:0;top:0;width:1024px;height:620px"><path d="M810.70 138.34 l2.20 2.20 l2.20 -2.20" fill="none" stroke="#8a8a8a" stroke-width="1.0" stroke-linecap="round" stroke-linejoin="round"/></svg>
<svg class="i" style="left:820.50px;top:134.44px;width:10.00px;height:10.00px;color:#7a7a7a;"><use href="#coll"/></svg>
<div id="t87" class="t " style="top:134.34px;left:833.80px;color:#8f8f8f;letter-spacing:-0.018px;"><span class="l">cloth release</span></div>
<svg class="i" style="left:968.00px;top:135.14px;width:8.60px;height:8.60px;color:#e8e8e8;"><use href="#chk"/></svg>
<svg class="i" style="left:980.50px;top:135.14px;width:8.60px;height:8.60px;color:#5a5a5a;"><use href="#arrow"/></svg>
<svg class="i" style="left:992.90px;top:135.84px;width:9.60px;height:9.60px;color:#5a5a5a;"><use href="#eyeoff"/></svg>
<svg class="i" style="left:1005.90px;top:134.64px;width:9.60px;height:9.60px;color:#5a5a5a;"><use href="#camoff"/></svg>
<svg class="i" style="left:0;top:0;width:1024px;height:620px"><path d="M824.40 149.98 l2.20 2.20 l-2.20 2.20" fill="none" stroke="#8a8a8a" stroke-width="1.0" stroke-linecap="round" stroke-linejoin="round"/></svg>
<svg class="i" style="left:832.70px;top:147.58px;width:9.60px;height:9.60px;color:#b5713a;"><use href="#mesh"/></svg>
<div id="t88" class="t " style="top:147.08px;left:846.40px;color:#8f8f8f;letter-spacing:0.156px;"><span class="l">bra</span></div>
<svg class="i" style="left:871.40px;top:147.58px;width:9.20px;height:9.20px;color:#456aa6;"><use href="#wrench"/></svg>
<svg class="i" style="left:884.00px;top:147.68px;width:9.00px;height:9.00px;color:#8d8d8d;"><use href="#parts"/></svg>
<svg class="i" style="left:896.70px;top:147.68px;width:9.60px;height:9.60px;color:#1d9570;"><use href="#mdata"/></svg>
<svg class="i" style="left:980.50px;top:147.88px;width:8.60px;height:8.60px;color:#5a5a5a;"><use href="#arrow"/></svg>
<svg class="i" style="left:992.90px;top:147.38px;width:9.60px;height:9.60px;color:#5a5a5a;"><use href="#eye"/></svg>
<svg class="i" style="left:1005.90px;top:147.38px;width:9.60px;height:9.60px;color:#5a5a5a;"><use href="#camoff"/></svg>
<svg class="i" style="left:0;top:0;width:1024px;height:620px"><path d="M824.40 162.72 l2.20 2.20 l-2.20 2.20" fill="none" stroke="#8a8a8a" stroke-width="1.0" stroke-linecap="round" stroke-linejoin="round"/></svg>
<svg class="i" style="left:832.70px;top:160.32px;width:9.60px;height:9.60px;color:#b5713a;"><use href="#mesh"/></svg>
<div id="t89" class="t " style="top:159.82px;left:846.40px;color:#8f8f8f;letter-spacing:0.167px;"><span class="l">collared-shirt</span></div>
<svg class="i" style="left:907.80px;top:160.22px;width:9.40px;height:9.40px;color:#9a9a9a;"><use href="#con"/></svg>
<svg class="i" style="left:920.40px;top:160.32px;width:9.20px;height:9.20px;color:#456aa6;"><use href="#wrench"/></svg>
<svg class="i" style="left:933.00px;top:160.42px;width:9.00px;height:9.00px;color:#8d8d8d;"><use href="#parts"/></svg>
<svg class="i" style="left:945.20px;top:160.42px;width:9.60px;height:9.60px;color:#1d9570;"><use href="#mdata"/></svg>
<svg class="i" style="left:980.50px;top:160.62px;width:8.60px;height:8.60px;color:#5a5a5a;"><use href="#arrow"/></svg>
<svg class="i" style="left:992.90px;top:160.12px;width:9.60px;height:9.60px;color:#5a5a5a;"><use href="#eye"/></svg>
<svg class="i" style="left:1005.90px;top:160.12px;width:9.60px;height:9.60px;color:#5a5a5a;"><use href="#cam"/></svg>
<svg class="i" style="left:0;top:0;width:1024px;height:620px"><path d="M824.40 175.46 l2.20 2.20 l-2.20 2.20" fill="none" stroke="#8a8a8a" stroke-width="1.0" stroke-linecap="round" stroke-linejoin="round"/></svg>
<svg class="i" style="left:832.70px;top:173.06px;width:9.60px;height:9.60px;color:#b5713a;"><use href="#mesh"/></svg>
<div id="t90" class="t " style="top:172.56px;left:846.40px;color:#8f8f8f;letter-spacing:0.197px;"><span class="l">Niwako-moji</span></div>
<svg class="i" style="left:904.40px;top:173.06px;width:9.20px;height:9.20px;color:#456aa6;"><use href="#wrench"/></svg>
<svg class="i" style="left:917.00px;top:173.16px;width:9.00px;height:9.00px;color:#8d8d8d;"><use href="#parts"/></svg>
<svg class="i" style="left:929.20px;top:173.16px;width:9.60px;height:9.60px;color:#1d9570;"><use href="#mdata"/></svg>
<svg class="i" style="left:980.50px;top:173.36px;width:8.60px;height:8.60px;color:#5a5a5a;"><use href="#arrow"/></svg>
<svg class="i" style="left:992.90px;top:172.86px;width:9.60px;height:9.60px;color:#5a5a5a;"><use href="#eye"/></svg>
<svg class="i" style="left:1005.90px;top:172.86px;width:9.60px;height:9.60px;color:#5a5a5a;"><use href="#camoff"/></svg>
<svg class="i" style="left:0;top:0;width:1024px;height:620px"><path d="M824.40 188.20 l2.20 2.20 l-2.20 2.20" fill="none" stroke="#8a8a8a" stroke-width="1.0" stroke-linecap="round" stroke-linejoin="round"/></svg>
<svg class="i" style="left:832.70px;top:185.80px;width:9.60px;height:9.60px;color:#b5713a;"><use href="#mesh"/></svg>
<div id="t91" class="t " style="top:185.30px;left:846.40px;color:#8f8f8f;letter-spacing:-0.031px;"><span class="l">pants</span></div>
<svg class="i" style="left:879.40px;top:185.80px;width:9.20px;height:9.20px;color:#456aa6;"><use href="#wrench"/></svg>
<svg class="i" style="left:892.00px;top:185.90px;width:9.00px;height:9.00px;color:#8d8d8d;"><use href="#parts"/></svg>
<svg class="i" style="left:904.70px;top:185.90px;width:9.60px;height:9.60px;color:#1d9570;"><use href="#mdata"/></svg>
<svg class="i" style="left:980.50px;top:186.10px;width:8.60px;height:8.60px;color:#5a5a5a;"><use href="#arrow"/></svg>
<svg class="i" style="left:992.90px;top:185.60px;width:9.60px;height:9.60px;color:#5a5a5a;"><use href="#eye"/></svg>
<svg class="i" style="left:1005.90px;top:185.60px;width:9.60px;height:9.60px;color:#5a5a5a;"><use href="#cam"/></svg>
<svg class="i" style="left:0;top:0;width:1024px;height:620px"><path d="M824.40 200.94 l2.20 2.20 l-2.20 2.20" fill="none" stroke="#8a8a8a" stroke-width="1.0" stroke-linecap="round" stroke-linejoin="round"/></svg>
<svg class="i" style="left:832.70px;top:198.54px;width:9.60px;height:9.60px;color:#b5713a;"><use href="#mesh"/></svg>
<div id="t92" class="t " style="top:198.04px;left:846.40px;color:#8f8f8f;letter-spacing:-0.104px;"><span class="l">parker</span></div>
<svg class="i" style="left:882.80px;top:198.44px;width:9.40px;height:9.40px;color:#9a9a9a;"><use href="#con"/></svg>
<svg class="i" style="left:895.40px;top:198.54px;width:9.20px;height:9.20px;color:#456aa6;"><use href="#wrench"/></svg>
<svg class="i" style="left:908.00px;top:198.64px;width:9.00px;height:9.00px;color:#8d8d8d;"><use href="#parts"/></svg>
<svg class="i" style="left:920.20px;top:198.64px;width:9.60px;height:9.60px;color:#1d9570;"><use href="#mdata"/></svg>
<svg class="i" style="left:980.50px;top:198.84px;width:8.60px;height:8.60px;color:#5a5a5a;"><use href="#arrow"/></svg>
<svg class="i" style="left:992.90px;top:198.34px;width:9.60px;height:9.60px;color:#5a5a5a;"><use href="#eye"/></svg>
<svg class="i" style="left:1005.90px;top:198.34px;width:9.60px;height:9.60px;color:#5a5a5a;"><use href="#camoff"/></svg>
<svg class="i" style="left:0;top:0;width:1024px;height:620px"><path d="M824.40 213.68 l2.20 2.20 l-2.20 2.20" fill="none" stroke="#8a8a8a" stroke-width="1.0" stroke-linecap="round" stroke-linejoin="round"/></svg>
<svg class="i" style="left:832.70px;top:211.28px;width:9.60px;height:9.60px;color:#b5713a;"><use href="#mesh"/></svg>
<div id="t93" class="t " style="top:210.78px;left:846.40px;color:#8f8f8f;letter-spacing:0.072px;"><span class="l">sailar-beret</span></div>
<svg class="i" style="left:900.40px;top:211.28px;width:9.20px;height:9.20px;color:#456aa6;"><use href="#wrench"/></svg>
<svg class="i" style="left:912.50px;top:211.38px;width:9.00px;height:9.00px;color:#8d8d8d;"><use href="#parts"/></svg>
<svg class="i" style="left:925.20px;top:211.38px;width:9.60px;height:9.60px;color:#1d9570;"><use href="#mdata"/></svg>
<svg class="i" style="left:980.50px;top:211.58px;width:8.60px;height:8.60px;color:#5a5a5a;"><use href="#arrow"/></svg>
<svg class="i" style="left:992.90px;top:211.08px;width:9.60px;height:9.60px;color:#5a5a5a;"><use href="#eye"/></svg>
<svg class="i" style="left:1005.90px;top:211.08px;width:9.60px;height:9.60px;color:#5a5a5a;"><use href="#camoff"/></svg>
<svg class="i" style="left:0;top:0;width:1024px;height:620px"><path d="M824.40 226.42 l2.20 2.20 l-2.20 2.20" fill="none" stroke="#8a8a8a" stroke-width="1.0" stroke-linecap="round" stroke-linejoin="round"/></svg>
<svg class="i" style="left:832.70px;top:224.02px;width:9.60px;height:9.60px;color:#b5713a;"><use href="#mesh"/></svg>
<div id="t94" class="t " style="top:223.52px;left:846.40px;color:#8f8f8f;letter-spacing:0.165px;"><span class="l">sailar-uniform</span></div>
<svg class="i" style="left:910.30px;top:223.92px;width:9.40px;height:9.40px;color:#9a9a9a;"><use href="#con"/></svg>
<svg class="i" style="left:922.90px;top:224.02px;width:9.20px;height:9.20px;color:#456aa6;"><use href="#wrench"/></svg>
<svg class="i" style="left:935.50px;top:224.12px;width:9.00px;height:9.00px;color:#8d8d8d;"><use href="#parts"/></svg>
<svg class="i" style="left:948.20px;top:224.12px;width:9.60px;height:9.60px;color:#1d9570;"><use href="#mdata"/></svg>
<svg class="i" style="left:980.50px;top:224.32px;width:8.60px;height:8.60px;color:#5a5a5a;"><use href="#arrow"/></svg>
<svg class="i" style="left:992.90px;top:223.82px;width:9.60px;height:9.60px;color:#5a5a5a;"><use href="#eye"/></svg>
<svg class="i" style="left:1005.90px;top:223.82px;width:9.60px;height:9.60px;color:#5a5a5a;"><use href="#camoff"/></svg>
<svg class="i" style="left:0;top:0;width:1024px;height:620px"><path d="M824.40 239.16 l2.20 2.20 l-2.20 2.20" fill="none" stroke="#8a8a8a" stroke-width="1.0" stroke-linecap="round" stroke-linejoin="round"/></svg>
<svg class="i" style="left:832.70px;top:236.76px;width:9.60px;height:9.60px;color:#b5713a;"><use href="#mesh"/></svg>
<div id="t95" class="t " style="top:236.26px;left:846.40px;color:#8f8f8f;letter-spacing:-0.072px;"><span class="l">shoes</span></div>
<svg class="i" style="left:881.40px;top:236.76px;width:9.20px;height:9.20px;color:#456aa6;"><use href="#wrench"/></svg>
<svg class="i" style="left:894.00px;top:236.86px;width:9.00px;height:9.00px;color:#8d8d8d;"><use href="#parts"/></svg>
<svg class="i" style="left:906.20px;top:236.86px;width:9.60px;height:9.60px;color:#1d9570;"><use href="#mdata"/></svg>
<svg class="i" style="left:980.50px;top:237.06px;width:8.60px;height:8.60px;color:#5a5a5a;"><use href="#arrow"/></svg>
<svg class="i" style="left:992.90px;top:236.56px;width:9.60px;height:9.60px;color:#5a5a5a;"><use href="#eye"/></svg>
<svg class="i" style="left:1005.90px;top:236.56px;width:9.60px;height:9.60px;color:#5a5a5a;"><use href="#cam"/></svg>
<svg class="i" style="left:0;top:0;width:1024px;height:620px"><path d="M824.40 251.90 l2.20 2.20 l-2.20 2.20" fill="none" stroke="#8a8a8a" stroke-width="1.0" stroke-linecap="round" stroke-linejoin="round"/></svg>
<svg class="i" style="left:832.70px;top:249.50px;width:9.60px;height:9.60px;color:#b5713a;"><use href="#mesh"/></svg>
<div id="t96" class="t " style="top:249.00px;left:846.40px;color:#8f8f8f;letter-spacing:0.270px;"><span class="l">waist-cloth</span></div>
<svg class="i" style="left:900.40px;top:249.50px;width:9.20px;height:9.20px;color:#456aa6;"><use href="#wrench"/></svg>
<svg class="i" style="left:912.50px;top:249.60px;width:9.00px;height:9.00px;color:#8d8d8d;"><use href="#parts"/></svg>
<svg class="i" style="left:925.20px;top:249.60px;width:9.60px;height:9.60px;color:#1d9570;"><use href="#mdata"/></svg>
<svg class="i" style="left:980.50px;top:249.80px;width:8.60px;height:8.60px;color:#5a5a5a;"><use href="#arrow"/></svg>
<svg class="i" style="left:992.90px;top:249.30px;width:9.60px;height:9.60px;color:#5a5a5a;"><use href="#eye"/></svg>
<svg class="i" style="left:1005.90px;top:249.30px;width:9.60px;height:9.60px;color:#5a5a5a;"><use href="#cam"/></svg>
<svg class="i" style="left:0;top:0;width:1024px;height:620px"><path d="M811.60 264.64 l2.20 2.20 l-2.20 2.20" fill="none" stroke="#d0d0d0" stroke-width="1.0" stroke-linecap="round" stroke-linejoin="round"/></svg>
<div class="r " style="left:819.50px;top:261.04px;width:12.00px;height:11.60px;background:#77583f;border-radius:2.5px;"></div>
<svg class="i" style="left:820.70px;top:262.04px;width:9.60px;height:9.60px;color:#f0a050;"><use href="#arm"/></svg>
<div id="t97" class="t " style="top:261.74px;left:833.90px;color:#f0b430;letter-spacing:0.018px;"><span class="l">Armature</span></div>
<svg class="i" style="left:879.80px;top:262.14px;width:9.40px;height:9.40px;color:#d8d8d8;"><use href="#con"/></svg>
<svg class="i" style="left:892.70px;top:262.04px;width:9.60px;height:9.60px;color:#1fb8c8;"><use href="#arm"/></svg>
<svg class="i" style="left:905.20px;top:262.04px;width:9.60px;height:9.60px;color:#1fb8c8;"><use href="#arm"/></svg>
<svg class="i" style="left:918.20px;top:262.24px;width:9.60px;height:9.60px;color:#e8954a;"><use href="#mesh"/></svg>
<div id="t98" class="t " style="top:263.44px;left:928.50px;color:#d0d0d0;font-size:5.00px;"><span class="l">7</span></div>
<svg class="i" style="left:980.50px;top:262.54px;width:8.60px;height:8.60px;color:#e8e8e8;"><use href="#arrow"/></svg>
<svg class="i" style="left:992.90px;top:262.04px;width:9.60px;height:9.60px;color:#e8e8e8;"><use href="#eye"/></svg>
<svg class="i" style="left:1005.90px;top:262.04px;width:9.60px;height:9.60px;color:#e8e8e8;"><use href="#cam"/></svg>
<div class="r " style="left:793.80px;top:295.60px;width:228.40px;height:2.40px;background:#171717;"></div>
<div class="r " style="left:793.80px;top:298.00px;width:228.40px;height:306.60px;background:#303030;border-radius:4.0px;"></div>
<div class="r " style="left:793.80px;top:314.00px;width:17.40px;height:290.60px;background:#1c1c1c;border-radius:0 0 0 4px;"></div>
<div class="r " style="left:798.80px;top:300.30px;width:18.60px;height:10.70px;background:#282828;border-radius:2.5px;"></div>
<svg class="i" style="left:800.55px;top:300.95px;width:9.50px;height:9.50px;color:#e6e6e6;"><use href="#props"/></svg>
<svg class="i" style="left:0;top:0;width:1024px;height:620px"><path d="M812.20 305.10 l1.80 1.80 l1.80 -1.80" fill="none" stroke="#ccc" stroke-width="1.0" stroke-linecap="round" stroke-linejoin="round"/></svg>
<div class="r " style="left:871.30px;top:300.30px;width:74.70px;height:10.70px;background:#1d1d1d;border-radius:2.5px;"></div>
<svg class="i" style="left:873.75px;top:301.45px;width:8.50px;height:8.50px;color:#dcdcdc;"><use href="#search"/></svg>
<div id="t99" class="t " style="top:299.80px;left:887.00px;color:#6f6f6f;font-size:6.40px;">検索</div>
<div class="r " style="left:1006.00px;top:300.30px;width:11.40px;height:10.70px;background:#282828;border-radius:2.5px;"></div>
<svg class="i" style="left:0;top:0;width:1024px;height:620px"><path d="M1009.90 305.10 l1.80 1.80 l1.80 -1.80" fill="none" stroke="#ccc" stroke-width="1.0" stroke-linecap="round" stroke-linejoin="round"/></svg>
<svg class="i" style="left:797.3px;top:322.8px;width:10.4px;height:10.4px" viewBox="0 0 16 16"><path d="M3.5 2v5M3.5 9.5v4.5" stroke="#e0e0e0" stroke-width="2.4" stroke-linecap="round"/><path d="M9 2v3.5l2 1.5 2-1.5V2M11 7v7" stroke="#e0e0e0" stroke-width="1.8" fill="none" stroke-linecap="round"/></svg>
<svg class="i" style="left:797.3px;top:345.5px;width:10.4px;height:10.4px" viewBox="0 0 16 16"><path d="M2 5h3l1-2h4l1 2h3v8H2z" fill="#e0e0e0"/><rect x="4.5" y="7" width="7" height="4" fill="#1c1c1c"/><path d="M10 3.5 13.5 2" stroke="#e0e0e0" stroke-width="1.2"/></svg>
<svg class="i" style="left:797.3px;top:363.0px;width:10.4px;height:10.4px" viewBox="0 0 16 16"><rect x="2" y="3" width="12" height="4.5" rx="1" fill="#e0e0e0"/><path d="M4.5 9h7v5h-7z" fill="none" stroke="#e0e0e0" stroke-width="1.4"/><path d="M6 11.5h4" stroke="#e0e0e0" stroke-width="1"/></svg>
<svg class="i" style="left:797.3px;top:381.1px;width:10.4px;height:10.4px" viewBox="0 0 16 16"><path d="M5 2.5h9v8.5" fill="none" stroke="#e0e0e0" stroke-width="1.3"/><rect x="2" y="5" width="9.5" height="9" fill="#e0e0e0"/><path d="M3.5 12l2.5-3.5 2 2 1.5-1 1 2.5z" fill="#1c1c1c"/></svg>
<svg class="i" style="left:797.3px;top:399.0px;width:10.4px;height:10.4px" viewBox="0 0 16 16"><path d="M2 12.5 5.5 3.5h2l2 9z" fill="#e0e0e0"/><circle cx="12" cy="4.5" r="1.7" fill="#e0e0e0"/><circle cx="11" cy="11" r="2.7" fill="none" stroke="#e0e0e0" stroke-width="1.4"/></svg>
<svg class="i" style="left:797.3px;top:416.4px;width:10.4px;height:10.4px" viewBox="0 0 16 16"><circle cx="8" cy="8" r="5.7" fill="none" stroke="#e0495a" stroke-width="1.5"/><path d="M4 5c2 0 3 1.5 2.5 3S5 10 6.5 12.5M9 3c-1 2 2 2 3 3.5s-1 2.5 0 4.5" fill="none" stroke="#e0495a" stroke-width="1.3"/></svg>
<svg class="i" style="left:797.3px;top:440.1px;width:10.4px;height:10.4px" viewBox="0 0 16 16"><rect x="4.5" y="4.5" width="7" height="7" fill="#e8954a"/><path d="M1.5 5V1.5H5M11 1.5h3.5V5M14.5 11v3.5H11M5 14.5H1.5V11" fill="none" stroke="#b06a30" stroke-width="1.3"/></svg>
<svg class="i" style="left:797.3px;top:457.8px;width:10.4px;height:10.4px" viewBox="0 0 16 16"><circle cx="7.5" cy="8.5" r="4.7" fill="none" stroke="#5b83d6" stroke-width="1.5"/><circle cx="7.5" cy="8.5" r="1.8" fill="#5b83d6"/><circle cx="12.5" cy="3.5" r="1.5" fill="#5b83d6"/></svg>
<svg class="i" style="left:797.3px;top:475.6px;width:10.4px;height:10.4px" viewBox="0 0 16 16"><ellipse cx="6.5" cy="10" rx="4" ry="3.2" fill="none" stroke="#5b83d6" stroke-width="1.6" transform="rotate(-35 6.5 10)"/><ellipse cx="9.5" cy="6.5" rx="4" ry="3.2" fill="none" stroke="#5b83d6" stroke-width="1.6" transform="rotate(-35 9.5 6.5)"/></svg>
<div class="r " style="left:795.50px;top:489.80px;width:15.70px;height:18.00px;background:#303030;border-radius:3px 0 0 3px;"></div>
<svg class="i" style="left:797.3px;top:493.6px;width:10.4px;height:10.4px" viewBox="0 0 16 16"><circle cx="6.2" cy="2.2" r="1.5" fill="#20b887"/><path d="M1.5 3.5l4.5 2 4.5-1.5 3 2.5M6 5.5l1.5 4-4.5 4.5M7.5 9.5l4 1.5 1.5 3.5" fill="none" stroke="#20b887" stroke-width="1.5" stroke-linecap="round" stroke-linejoin="round"/></svg>
<svg class="i" style="left:797.3px;top:511.6px;width:10.4px;height:10.4px" viewBox="0 0 16 16"><path d="M4.6 4.6 11.4 11.4" stroke="#20b887" stroke-width="2.6"/><circle cx="3.2" cy="5.2" r="1.9" fill="#20b887"/><circle cx="5.2" cy="3.2" r="1.9" fill="#20b887"/><circle cx="12.8" cy="10.8" r="1.9" fill="#20b887"/><circle cx="10.8" cy="12.8" r="1.9" fill="#20b887"/></svg>
<svg class="i" style="left:797.3px;top:528.6px;width:10.4px;height:10.4px" viewBox="0 0 16 16"><path d="M5 5 11 11" stroke="#5b83d6" stroke-width="2.2"/><circle cx="3.8" cy="5.4" r="1.6" fill="#5b83d6"/><circle cx="5.4" cy="3.8" r="1.6" fill="#5b83d6"/><circle cx="12.2" cy="10.6" r="1.6" fill="#5b83d6"/><circle cx="10.6" cy="12.2" r="1.6" fill="#5b83d6"/><ellipse cx="8" cy="8" rx="6.6" ry="2.8" fill="none" stroke="#5b83d6" stroke-width="1.2" transform="rotate(40 8 8)"/></svg>
<svg class="i" style="left:816.70px;top:319.50px;width:9.00px;height:9.00px;color:#e6e6e6;"><use href="#objmode"/></svg>
<div id="t100" class="t " style="top:318.20px;left:830.00px;font-size:5.85px;letter-spacing:-0.020px;"><span class="l">Armature</span></div>
<svg class="i" style="left:0;top:0;width:1024px;height:620px"><path d="M865.30 322.30 l2.00 2.00 l-2.00 2.00" fill="none" stroke="#ccc" stroke-width="1.0" stroke-linecap="round" stroke-linejoin="round"/></svg>
<svg class="i" style="left:873.70px;top:319.50px;width:9.00px;height:9.00px;color:#e6e6e6;"><use href="#arm"/></svg>
<div id="t101" class="t " style="top:318.20px;left:886.70px;font-size:5.85px;letter-spacing:0.120px;"><span class="l">Armature (</span>アーマチュア<span class="l">.)</span></div>
<svg class="i" style="left:1008.75px;top:319.75px;width:8.50px;height:8.50px;color:#9a9a9a;"><use href="#pin"/></svg>
<div class="r " style="left:816.30px;top:339.00px;width:16.30px;height:9.30px;background:#282828;border-radius:2.5px 0 0 2.5px;"></div>
<svg class="i" style="left:817.75px;top:339.35px;width:8.50px;height:8.50px;color:#e6e6e6;"><use href="#arm"/></svg>
<svg class="i" style="left:0;top:0;width:1024px;height:620px"><path d="M827.40 343.20 l1.60 1.60 l1.60 -1.60" fill="none" stroke="#ccc" stroke-width="1.0" stroke-linecap="round" stroke-linejoin="round"/></svg>
<div class="r " style="left:833.00px;top:339.00px;width:174.20px;height:9.30px;background:#1c1c1c;"></div>
<div id="t102" class="t " style="top:337.80px;left:836.20px;font-size:5.85px;letter-spacing:0.153px;"><span class="l">Armature (</span>アーマチュア<span class="l">.)</span></div>
<div class="r " style="left:1007.60px;top:339.00px;width:10.90px;height:9.30px;background:#595959;border-radius:0 2.5px 2.5px 0;"></div>
<svg class="i" style="left:1009.00px;top:339.60px;width:8.00px;height:8.00px;color:#9a9a9a;"><use href="#shield"/></svg>
<div class="r " style="left:815.40px;top:355.20px;width:203.80px;height:32.70px;background:#3d3d3d;border-radius:3.0px;"></div>
<svg class="i" style="left:0;top:0;width:1024px;height:620px"><path d="M820.00 361.40 l2.00 2.00 l2.00 -2.00" fill="none" stroke="#ddd" stroke-width="1.0" stroke-linecap="round" stroke-linejoin="round"/></svg>
<div id="t103" class="t " style="top:356.30px;left:826.40px;font-size:5.85px;letter-spacing:0.117px;">ポーズ</div>
<svg class="i" style="left:1009.0px;top:359.5px;width:8px;height:4px" viewBox="0 0 8 4"><g fill="#555"><circle cx="1" cy="1" r=".55"/><circle cx="3" cy="1" r=".55"/><circle cx="5" cy="1" r=".55"/><circle cx="7" cy="1" r=".55"/><circle cx="1" cy="3" r=".55"/><circle cx="3" cy="3" r=".55"/><circle cx="5" cy="3" r=".55"/><circle cx="7" cy="3" r=".55"/></g></svg>
<div class="r " style="left:820.50px;top:373.20px;width:95.80px;height:9.60px;background:#4772b3;border-radius:2.5px 0 0 2.5px;"></div>
<div id="t104" class="t " style="top:372.00px;left:868.40px;transform:translateX(-50%);color:#fff;font-size:5.85px;">ポーズ位置</div>
<div class="r " style="left:916.70px;top:373.20px;width:97.30px;height:9.60px;background:#595959;border-radius:0 2.5px 2.5px 0;"></div>
<div id="t105" class="t " style="top:372.00px;left:965.30px;transform:translateX(-50%);font-size:5.85px;">レスト位置</div>
<div class="r " style="left:815.40px;top:389.70px;width:203.80px;height:109.30px;background:#3d3d3d;border-radius:3.0px;"></div>
<svg class="i" style="left:0;top:0;width:1024px;height:620px"><path d="M820.00 395.90 l2.00 2.00 l2.00 -2.00" fill="none" stroke="#ddd" stroke-width="1.0" stroke-linecap="round" stroke-linejoin="round"/></svg>
<div id="t106" class="t " style="top:390.80px;left:826.40px;font-size:5.85px;letter-spacing:-0.035px;">ボーンコレクション</div>
<svg class="i" style="left:1009.0px;top:394.0px;width:8px;height:4px" viewBox="0 0 8 4"><g fill="#555"><circle cx="1" cy="1" r=".55"/><circle cx="3" cy="1" r=".55"/><circle cx="5" cy="1" r=".55"/><circle cx="7" cy="1" r=".55"/><circle cx="1" cy="3" r=".55"/><circle cx="3" cy="3" r=".55"/><circle cx="5" cy="3" r=".55"/><circle cx="7" cy="3" r=".55"/></g></svg>
<div class="r " style="left:820.30px;top:407.00px;width:178.30px;height:45.50px;background:#282828;border-radius:2.5px;"></div>
<div id="t107" class="t " style="top:410.20px;left:832.80px;font-size:5.85px;letter-spacing:0.040px;"><span class="l">Layer 2</span></div>
<svg class="i" style="left:959px;top:413.6px;width:4px;height:4px" viewBox="0 0 4 4"><circle cx="2.2" cy="2.1" r="1.35" fill="#e8e8e8"/></svg>
<svg class="i" style="left:968.35px;top:411.45px;width:8.50px;height:8.50px;color:#e8e8e8;"><use href="#eye"/></svg>
<svg class="i" style="left:980.00px;top:411.50px;width:8.00px;height:8.00px;color:#e8e8e8;"><use href="#star"/></svg>
<div class="r " style="left:823.00px;top:422.40px;width:168.40px;height:9.50px;background:#4772b3;border-radius:2.0px;"></div>
<div id="t108" class="t " style="top:421.70px;left:832.80px;color:#fff;font-size:5.85px;letter-spacing:0.040px;"><span class="l">Layer 3</span></div>
<svg class="i" style="left:968.35px;top:423.35px;width:8.50px;height:8.50px;color:#a9bfe3;"><use href="#eyeoff"/></svg>
<svg class="i" style="left:980.00px;top:423.00px;width:8.00px;height:8.00px;color:#e8e8e8;"><use href="#star"/></svg>
<svg class="i" style="left:905.5px;top:446.5px;width:8px;height:4px" viewBox="0 0 8 4"><g fill="#5a5a5a"><circle cx="1" cy="1" r=".55"/><circle cx="3" cy="1" r=".55"/><circle cx="5" cy="1" r=".55"/><circle cx="7" cy="1" r=".55"/><circle cx="1" cy="3" r=".55"/><circle cx="3" cy="3" r=".55"/><circle cx="5" cy="3" r=".55"/><circle cx="7" cy="3" r=".55"/></g></svg>
<div class="r " style="left:1004.30px;top:407.70px;width:9.70px;height:9.70px;background:#595959;border-radius:2.5px 2.5px 0 0;"></div>
<div id="t109" class="t " style="top:406.20px;left:1009.15px;transform:translateX(-50%);color:#ddd;font-size:8.00px;"><span class="l">+</span></div>
<div class="r " style="left:1004.30px;top:417.90px;width:9.70px;height:10.10px;background:#595959;border-radius:0 0 2.5px 2.5px;"></div>
<div id="t110" class="t " style="top:416.60px;left:1009.15px;transform:translateX(-50%);color:#ddd;font-size:8.00px;">−</div>
<div class="r " style="left:1004.30px;top:432.60px;width:9.70px;height:9.50px;background:#282828;border-radius:2.5px;"></div>
<svg class="i" style="left:0;top:0;width:1024px;height:620px"><path d="M1007.35 436.70 l1.80 1.80 l1.80 -1.80" fill="none" stroke="#ddd" stroke-width="1.0" stroke-linecap="round" stroke-linejoin="round"/></svg>
<div class="r " style="left:1004.30px;top:446.60px;width:9.70px;height:9.80px;background:#595959;border-radius:2.5px 2.5px 0 0;"></div>
<div class="r " style="left:1004.30px;top:456.80px;width:9.70px;height:9.80px;background:#595959;border-radius:0 0 2.5px 2.5px;"></div>
<svg class="i" style="left:0;top:0;width:1024px;height:620px"><path d="M1006.6 453l2.55-3 2.55 3zM1006.6 460.2l2.55 3 2.55-3z" fill="#e8e8e8"/></svg>
<div class="r " style="left:820.30px;top:471.10px;width:46.00px;height:9.70px;background:#595959;border-radius:2.5px 0 0 2.5px;"></div>
<div id="t111" class="t " style="top:470.00px;left:843.30px;transform:translateX(-50%);font-size:5.85px;">割り当て</div>
<div class="r " style="left:866.80px;top:471.10px;width:47.50px;height:9.70px;background:#595959;border-radius:0 2.5px 2.5px 0;"></div>
<div id="t112" class="t " style="top:470.00px;left:890.50px;transform:translateX(-50%);font-size:5.85px;">削除</div>
<div class="r " style="left:919.50px;top:471.10px;width:46.90px;height:9.70px;background:#595959;border-radius:2.5px 0 0 2.5px;"></div>
<div id="t113" class="t " style="top:470.00px;left:943.00px;transform:translateX(-50%);font-size:5.85px;">選択</div>
<div class="r " style="left:966.90px;top:471.10px;width:47.10px;height:9.70px;background:#595959;border-radius:0 2.5px 2.5px 0;"></div>
<div id="t114" class="t " style="top:470.00px;left:990.50px;transform:translateX(-50%);font-size:5.85px;">選択解除</div>
<svg class="i" style="left:0;top:0;width:1024px;height:620px"><path d="M828.60 491.00 l2.00 2.00 l-2.00 2.00" fill="none" stroke="#ddd" stroke-width="1.0" stroke-linecap="round" stroke-linejoin="round"/></svg>
<div id="t115" class="t " style="top:487.00px;left:833.90px;font-size:5.85px;letter-spacing:-0.101px;">カスタムプロパティ</div>
<div class="r " style="left:815.40px;top:501.00px;width:203.80px;height:12.70px;background:#3d3d3d;border-radius:3.0px;"></div>
<svg class="i" style="left:0;top:0;width:1024px;height:620px"><path d="M821.00 506.20 l2.00 2.00 l-2.00 2.00" fill="none" stroke="#ddd" stroke-width="1.0" stroke-linecap="round" stroke-linejoin="round"/></svg>
<div id="t116" class="t " style="top:502.10px;left:826.40px;font-size:5.85px;letter-spacing:-0.114px;">モーションパス</div>
<svg class="i" style="left:1009.0px;top:505.3px;width:8px;height:4px" viewBox="0 0 8 4"><g fill="#555"><circle cx="1" cy="1" r=".55"/><circle cx="3" cy="1" r=".55"/><circle cx="5" cy="1" r=".55"/><circle cx="7" cy="1" r=".55"/><circle cx="1" cy="3" r=".55"/><circle cx="3" cy="3" r=".55"/><circle cx="5" cy="3" r=".55"/><circle cx="7" cy="3" r=".55"/></g></svg>
<div class="r " style="left:815.40px;top:515.30px;width:203.80px;height:89.30px;background:#3d3d3d;border-radius:3.0px;"></div>
<svg class="i" style="left:0;top:0;width:1024px;height:620px"><path d="M820.00 521.50 l2.00 2.00 l2.00 -2.00" fill="none" stroke="#ddd" stroke-width="1.0" stroke-linecap="round" stroke-linejoin="round"/></svg>
<div id="t117" class="t " style="top:516.40px;left:826.40px;font-size:5.85px;letter-spacing:-0.031px;">ビューポート表示</div>
<svg class="i" style="left:1009.0px;top:519.6px;width:8px;height:4px" viewBox="0 0 8 4"><g fill="#555"><circle cx="1" cy="1" r=".55"/><circle cx="3" cy="1" r=".55"/><circle cx="5" cy="1" r=".55"/><circle cx="7" cy="1" r=".55"/><circle cx="1" cy="3" r=".55"/><circle cx="3" cy="3" r=".55"/><circle cx="5" cy="3" r=".55"/><circle cx="7" cy="3" r=".55"/></g></svg>
<div id="t118" class="t " style="top:532.40px;right:133.00px;font-size:5.85px;">表示方法</div>
<div class="r " style="left:896.20px;top:533.70px;width:106.50px;height:9.30px;background:#282828;border-radius:2.5px;"></div>
<div id="t119" class="t " style="top:532.40px;left:900.30px;font-size:5.85px;letter-spacing:-0.075px;">スティック</div>
<svg class="i" style="left:0;top:0;width:1024px;height:620px"><path d="M997.10 537.85 l1.70 1.70 l1.70 -1.70" fill="none" stroke="#ccc" stroke-width="1.0" stroke-linecap="round" stroke-linejoin="round"/></svg>
<svg class="i" style="left:1006.8px;top:536.40px;width:4px;height:4px" viewBox="0 0 4 4"><circle cx="2" cy="2" r="1.25" fill="#e8e8e8"/></svg>
<div id="t120" class="t " style="top:546.00px;right:133.00px;font-size:5.85px;">表示</div>
<div class="r " style="left:896.70px;top:548.70px;width:6.50px;height:6.60px;background:#4772b3;border-radius:1.5px;"></div>
<svg class="i" style="left:896.7px;top:548.70px;width:6.5px;height:6.6px" viewBox="0 0 10 10"><path d="M2.2 5.2l2 2 3.6-4.4" fill="none" stroke="#fff" stroke-width="1.5"/></svg>
<div id="t121" class="t " style="top:546.00px;left:905.30px;font-size:5.85px;letter-spacing:-0.094px;">名前</div>
<svg class="i" style="left:1006.8px;top:550.00px;width:4px;height:4px" viewBox="0 0 4 4"><circle cx="2" cy="2" r="1.25" fill="#e8e8e8"/></svg>
<div class="r " style="left:896.70px;top:560.60px;width:6.50px;height:6.60px;background:#4772b3;border-radius:1.5px;"></div>
<svg class="i" style="left:896.7px;top:560.60px;width:6.5px;height:6.6px" viewBox="0 0 10 10"><path d="M2.2 5.2l2 2 3.6-4.4" fill="none" stroke="#fff" stroke-width="1.5"/></svg>
<div id="t122" class="t " style="top:557.90px;left:905.30px;font-size:5.85px;letter-spacing:-0.219px;">シェイプ</div>
<svg class="i" style="left:1006.8px;top:561.90px;width:4px;height:4px" viewBox="0 0 4 4"><circle cx="2" cy="2" r="1.25" fill="#e8e8e8"/></svg>
<div class="r " style="left:896.70px;top:572.60px;width:6.50px;height:6.60px;background:#4772b3;border-radius:1.5px;"></div>
<svg class="i" style="left:896.7px;top:572.60px;width:6.5px;height:6.6px" viewBox="0 0 10 10"><path d="M2.2 5.2l2 2 3.6-4.4" fill="none" stroke="#fff" stroke-width="1.5"/></svg>
<div id="t123" class="t " style="top:569.90px;left:905.30px;font-size:5.85px;letter-spacing:-0.130px;">ボーンカラー</div>
<svg class="i" style="left:1006.8px;top:573.90px;width:4px;height:4px" viewBox="0 0 4 4"><circle cx="2" cy="2" r="1.25" fill="#e8e8e8"/></svg>
<div class="r " style="left:896.70px;top:584.70px;width:6.50px;height:6.60px;background:#4772b3;border-radius:1.5px;"></div>
<svg class="i" style="left:896.7px;top:584.70px;width:6.5px;height:6.6px" viewBox="0 0 10 10"><path d="M2.2 5.2l2 2 3.6-4.4" fill="none" stroke="#fff" stroke-width="1.5"/></svg>
<div id="t124" class="t " style="top:582.00px;left:905.30px;font-size:5.85px;letter-spacing:-0.177px;">最前面</div>
<svg class="i" style="left:1006.8px;top:586.00px;width:4px;height:4px" viewBox="0 0 4 4"><circle cx="2" cy="2" r="1.25" fill="#e8e8e8"/></svg>
<div id="t125" class="t " style="top:595.20px;right:133.00px;font-size:5.85px;">座標軸</div>
<div class="r " style="left:896.70px;top:597.90px;width:6.50px;height:6.60px;background:#4772b3;border-radius:1.5px;"></div>
<svg class="i" style="left:896.7px;top:597.90px;width:6.5px;height:6.6px" viewBox="0 0 10 10"><path d="M2.2 5.2l2 2 3.6-4.4" fill="none" stroke="#fff" stroke-width="1.5"/></svg>
<svg class="i" style="left:1006.8px;top:599.20px;width:4px;height:4px" viewBox="0 0 4 4"><circle cx="2" cy="2" r="1.25" fill="#e8e8e8"/></svg>
<div class="r " style="left:908.00px;top:596.70px;width:94.70px;height:9.30px;background:#595959;border-radius:2.5px;"></div>
<div id="t126" class="t " style="top:595.40px;left:914.60px;font-size:5.85px;">位置</div>
<div id="t127" class="t " style="top:595.40px;right:28.20px;font-size:5.85px;"><span class="l">0.0</span></div>
<div class="r " style="left:793.80px;top:604.60px;width:228.70px;height:13.70px;background:#171717;border-radius:0 0 7px 0;"></div>
<div id="t128" class="t " style="top:606.60px;right:7.70px;color:#8c8c8c;"><span class="l">4.3.2</span></div>
<div class="r " style="left:1019.90px;top:541.00px;width:1.90px;height:63.00px;background:#474747;border-radius:1.0px;"></div>
</div>
</body></html>
